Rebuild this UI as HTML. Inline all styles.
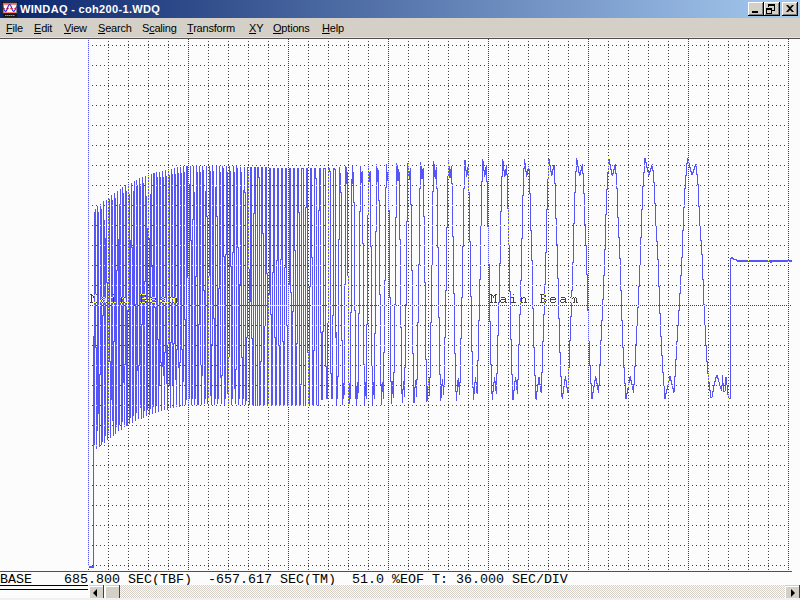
<!DOCTYPE html>
<html><head><meta charset="utf-8"><style>
html,body{margin:0;padding:0;width:800px;height:600px;overflow:hidden;background:#fcfcfc;}
*{box-sizing:border-box;}
.abs{position:absolute;}
#title{left:0;top:0;width:800px;height:18px;background:linear-gradient(to right,#0a246a,#a6caf0);}
#ttext{left:20px;top:3px;font:bold 11px "Liberation Sans",sans-serif;letter-spacing:0.33px;color:#fff;white-space:nowrap;line-height:12px;}
#menu{left:0;top:18px;width:800px;height:19px;background:#d4d0c8;}
.mi{top:22px;font:11px "Liberation Sans",sans-serif;letter-spacing:-0.2px;color:#000;white-space:nowrap;line-height:12px;}
.mi u{text-decoration:underline;text-underline-offset:1px;}
#status{left:0;top:573px;font:13.333px "Liberation Mono",monospace;color:#000;white-space:pre;line-height:14px;}
.lbl{font:12px "Liberation Mono",monospace;letter-spacing:2.8px;color:#383838;white-space:pre;line-height:12px;}
</style></head><body>
<div id="title" class="abs"></div>
<svg class="abs" style="left:0;top:0" width="20" height="18" shape-rendering="crispEdges">
<rect x="2" y="2" width="16" height="12" fill="#2a2a2a"/>
<rect x="3" y="3" width="14" height="10" fill="#8a8a80"/>
<rect x="4" y="4" width="12" height="9" fill="#ffffff"/>
<rect x="4" y="4" width="12" height="1" fill="#ff8080"/>
<rect x="4" y="12" width="12" height="1" fill="#ff8080"/>
<rect x="2" y="2" width="1" height="1" fill="#000"/><rect x="17" y="2" width="1" height="1" fill="#000"/>
<path d="M4 8h1v1h-1zM6 8h1v1h-1zM8 8h1v1h-1zM10 8h1v1h-1zM12 8h1v1h-1zM14 8h1v1h-1zM16 8h1v1h-1z" fill="#ff6060"/>
<path d="M3.4 7.6C4 10 4.6 11.3 5.6 11.3C7.5 11.3 7.6 4.5 9.6 4.5C11.6 4.5 11.6 11.3 13.6 11.3C14.8 11.3 15.6 9 16.5 6.6" fill="none" stroke="#2828f0" stroke-width="1.15" shape-rendering="auto"/>
<rect x="3" y="14" width="14" height="3" fill="#141414"/>
<path d="M5 15h1v1h-1zM7 15h1v1h-1zM9 15h1v1h-1zM11 15h1v1h-1zM13 15h1v1h-1z" fill="#9a9a9a"/>
<path d="M6 15h1v1h-1zM8 15h1v1h-1zM10 15h1v1h-1zM12 15h1v1h-1zM14 15h1v1h-1z" fill="#5a5a5a"/>
</svg>
<div id="ttext" class="abs">WINDAQ - coh200-1.WDQ</div>
<svg class="abs" style="left:748px;top:2px" width="50" height="14" shape-rendering="crispEdges">
<g transform="translate(0,0)">
<rect x="0" y="0" width="16" height="14" fill="#000"/>
<rect x="0" y="0" width="15" height="13" fill="#fff"/>
<rect x="1" y="1" width="14" height="12" fill="#808080"/>
<rect x="1" y="1" width="13" height="11" fill="#d4d0c8"/>
</g><g transform="translate(16,0)">
<rect x="0" y="0" width="16" height="14" fill="#000"/>
<rect x="0" y="0" width="15" height="13" fill="#fff"/>
<rect x="1" y="1" width="14" height="12" fill="#808080"/>
<rect x="1" y="1" width="13" height="11" fill="#d4d0c8"/>
</g><g transform="translate(34,0)">
<rect x="0" y="0" width="16" height="14" fill="#000"/>
<rect x="0" y="0" width="15" height="13" fill="#fff"/>
<rect x="1" y="1" width="14" height="12" fill="#808080"/>
<rect x="1" y="1" width="13" height="11" fill="#d4d0c8"/>
</g>
<rect x="4" y="9" width="6" height="2" fill="#000"/>
<path d="M20 2h7v7h-3v-1h2v-4h-5v1h-1z" fill="#000"/>
<path d="M18 6h6v6h-6zM19 8v3h4v-3z" fill="#000" fill-rule="evenodd"/>
<path d="M38 3h2l2 2 2-2h2l-3 3.5 3 3.5h-2l-2-2-2 2h-2l3-3.5z" fill="#000" shape-rendering="auto"/>
</svg>
<div id="menu" class="abs"></div>
<div class="abs" style="left:0;top:37px;width:800px;height:1px;background:#e4e2dc"></div>
<div class="abs" style="left:0;top:38px;width:800px;height:1px;background:#505050"></div>
<div class="abs mi" style="left:6px"><u>F</u>ile</div>
<div class="abs mi" style="left:34px"><u>E</u>dit</div>
<div class="abs mi" style="left:64px"><u>V</u>iew</div>
<div class="abs mi" style="left:98px"><u>S</u>earch</div>
<div class="abs mi" style="left:142px">S<u>c</u>aling</div>
<div class="abs mi" style="left:187px"><u>T</u>ransform</div>
<div class="abs mi" style="left:249px"><u>X</u>Y</div>
<div class="abs mi" style="left:273px"><u>O</u>ptions</div>
<div class="abs mi" style="left:322px"><u>H</u>elp</div>
<svg class="abs" style="left:0;top:0" width="800" height="600" shape-rendering="crispEdges">
<g stroke="#404040" stroke-width="1"><line x1="108.5" y1="41" x2="108.5" y2="570" stroke-dasharray="1 2"/><line x1="128.5" y1="41" x2="128.5" y2="570" stroke-dasharray="1 2"/><line x1="148.5" y1="41" x2="148.5" y2="570" stroke-dasharray="1 2"/><line x1="168.5" y1="41" x2="168.5" y2="570" stroke-dasharray="1 2"/><line x1="208.5" y1="41" x2="208.5" y2="570" stroke-dasharray="1 2"/><line x1="228.5" y1="41" x2="228.5" y2="570" stroke-dasharray="1 2"/><line x1="248.5" y1="41" x2="248.5" y2="570" stroke-dasharray="1 2"/><line x1="268.5" y1="41" x2="268.5" y2="570" stroke-dasharray="1 2"/><line x1="308.5" y1="41" x2="308.5" y2="570" stroke-dasharray="1 2"/><line x1="328.5" y1="41" x2="328.5" y2="570" stroke-dasharray="1 2"/><line x1="348.5" y1="41" x2="348.5" y2="570" stroke-dasharray="1 2"/><line x1="368.5" y1="41" x2="368.5" y2="570" stroke-dasharray="1 2"/><line x1="408.5" y1="41" x2="408.5" y2="570" stroke-dasharray="1 2"/><line x1="428.5" y1="41" x2="428.5" y2="570" stroke-dasharray="1 2"/><line x1="448.5" y1="41" x2="448.5" y2="570" stroke-dasharray="1 2"/><line x1="468.5" y1="41" x2="468.5" y2="570" stroke-dasharray="1 2"/><line x1="508.5" y1="41" x2="508.5" y2="570" stroke-dasharray="1 2"/><line x1="528.5" y1="41" x2="528.5" y2="570" stroke-dasharray="1 2"/><line x1="548.5" y1="41" x2="548.5" y2="570" stroke-dasharray="1 2"/><line x1="568.5" y1="41" x2="568.5" y2="570" stroke-dasharray="1 2"/><line x1="608.5" y1="41" x2="608.5" y2="570" stroke-dasharray="1 2"/><line x1="628.5" y1="41" x2="628.5" y2="570" stroke-dasharray="1 2"/><line x1="648.5" y1="41" x2="648.5" y2="570" stroke-dasharray="1 2"/><line x1="668.5" y1="41" x2="668.5" y2="570" stroke-dasharray="1 2"/><line x1="708.5" y1="41" x2="708.5" y2="570" stroke-dasharray="1 2"/><line x1="728.5" y1="41" x2="728.5" y2="570" stroke-dasharray="1 2"/><line x1="748.5" y1="41" x2="748.5" y2="570" stroke-dasharray="1 2"/><line x1="768.5" y1="41" x2="768.5" y2="570" stroke-dasharray="1 2"/><line x1="88.5" y1="39" x2="88.5" y2="570" stroke-dasharray="1 1"/><line x1="188.5" y1="39" x2="188.5" y2="570" stroke-dasharray="1 1"/><line x1="288.5" y1="39" x2="288.5" y2="570" stroke-dasharray="1 1"/><line x1="388.5" y1="39" x2="388.5" y2="570" stroke-dasharray="1 1"/><line x1="488.5" y1="39" x2="488.5" y2="570" stroke-dasharray="1 1"/><line x1="588.5" y1="39" x2="588.5" y2="570" stroke-dasharray="1 1"/><line x1="688.5" y1="39" x2="688.5" y2="570" stroke-dasharray="1 1"/><line x1="788.5" y1="39" x2="788.5" y2="570" stroke-dasharray="1 1"/><line x1="92" y1="45.5" x2="785" y2="45.5" stroke-dasharray="1 3"/><line x1="92" y1="65.5" x2="785" y2="65.5" stroke-dasharray="1 3"/><line x1="92" y1="85.5" x2="785" y2="85.5" stroke-dasharray="1 3"/><line x1="92" y1="105.5" x2="785" y2="105.5" stroke-dasharray="1 3"/><line x1="92" y1="125.5" x2="785" y2="125.5" stroke-dasharray="1 3"/><line x1="92" y1="145.5" x2="785" y2="145.5" stroke-dasharray="1 3"/><line x1="92" y1="165.5" x2="785" y2="165.5" stroke-dasharray="1 3"/><line x1="92" y1="185.5" x2="785" y2="185.5" stroke-dasharray="1 3"/><line x1="92" y1="205.5" x2="785" y2="205.5" stroke-dasharray="1 3"/><line x1="92" y1="225.5" x2="785" y2="225.5" stroke-dasharray="1 3"/><line x1="92" y1="245.5" x2="785" y2="245.5" stroke-dasharray="1 3"/><line x1="92" y1="265.5" x2="785" y2="265.5" stroke-dasharray="1 3"/><line x1="92" y1="285.5" x2="785" y2="285.5" stroke-dasharray="1 3"/><line x1="92" y1="325.5" x2="785" y2="325.5" stroke-dasharray="1 3"/><line x1="92" y1="345.5" x2="785" y2="345.5" stroke-dasharray="1 3"/><line x1="92" y1="365.5" x2="785" y2="365.5" stroke-dasharray="1 3"/><line x1="92" y1="385.5" x2="785" y2="385.5" stroke-dasharray="1 3"/><line x1="92" y1="405.5" x2="785" y2="405.5" stroke-dasharray="1 3"/><line x1="92" y1="425.5" x2="785" y2="425.5" stroke-dasharray="1 3"/><line x1="92" y1="445.5" x2="785" y2="445.5" stroke-dasharray="1 3"/><line x1="92" y1="465.5" x2="785" y2="465.5" stroke-dasharray="1 3"/><line x1="92" y1="485.5" x2="785" y2="485.5" stroke-dasharray="1 3"/><line x1="92" y1="505.5" x2="785" y2="505.5" stroke-dasharray="1 3"/><line x1="92" y1="525.5" x2="785" y2="525.5" stroke-dasharray="1 3"/><line x1="92" y1="545.5" x2="785" y2="545.5" stroke-dasharray="1 3"/><line x1="92" y1="565.5" x2="785" y2="565.5" stroke-dasharray="1 3"/><line x1="88" y1="305.5" x2="791" y2="305.5" stroke-dasharray="1 1"/></g>
<path fill="#404040" d="M90 294h1v1h-1zM90 302h1v1h-1zM91 294h1v9h-1zM92 295h1v1h-1zM92 302h1v1h-1zM93 296h1v2h-1zM96 294h1v1h-1zM96 302h1v1h-1zM102 297h1v1h-1zM102 299h1v1h-1zM102 302h1v1h-1zM106 302h1v1h-1zM113 294h1v1h-1zM113 297h1v6h-1zM121 297h1v6h-1zM124 297h1v1h-1zM124 302h1v1h-1zM141 294h1v9h-1zM145 295h1v2h-1zM145 299h1v1h-1zM145 301h1v2h-1zM151 297h1v1h-1zM151 299h1v1h-1zM151 302h1v1h-1zM155 298h1v2h-1zM155 301h1v1h-1zM161 297h1v1h-1zM161 299h1v1h-1zM161 302h1v1h-1zM164 297h1v1h-1zM164 299h1v1h-1zM164 301h1v1h-1zM170 297h1v1h-1zM170 302h1v1h-1zM173 297h1v1h-1zM173 302h1v1h-1zM176 298h1v5h-1zM490 294h1v1h-1zM490 302h1v1h-1zM491 294h1v9h-1zM492 295h1v1h-1zM492 302h1v1h-1zM493 296h1v2h-1zM494 295h1v1h-1zM494 302h1v1h-1zM495 294h1v9h-1zM496 294h1v1h-1zM496 302h1v1h-1zM500 300h1v2h-1zM501 297h1v1h-1zM501 299h1v1h-1zM501 302h1v1h-1zM502 297h1v1h-1zM502 299h1v1h-1zM502 302h1v1h-1zM503 297h1v1h-1zM503 299h1v1h-1zM503 302h1v1h-1zM504 297h1v1h-1zM504 299h1v1h-1zM504 301h1v1h-1zM505 298h1v5h-1zM506 302h1v1h-1zM511 297h1v1h-1zM511 302h1v1h-1zM512 297h1v1h-1zM512 302h1v1h-1zM513 294h1v1h-1zM513 297h1v6h-1zM514 302h1v1h-1zM515 302h1v1h-1zM521 297h1v6h-1zM522 298h1v1h-1zM522 302h1v1h-1zM523 297h1v1h-1zM524 297h1v1h-1zM524 302h1v1h-1zM525 298h1v5h-1zM526 302h1v1h-1zM540 294h1v1h-1zM540 302h1v1h-1zM541 294h1v9h-1zM542 294h1v1h-1zM542 298h1v1h-1zM542 302h1v1h-1zM543 294h1v1h-1zM543 298h1v1h-1zM543 302h1v1h-1zM545 295h1v2h-1zM545 299h1v1h-1zM545 301h1v2h-1zM546 300h1v1h-1zM550 298h1v4h-1zM551 297h1v1h-1zM551 299h1v1h-1zM551 302h1v1h-1zM552 297h1v1h-1zM552 299h1v1h-1zM552 302h1v1h-1zM553 297h1v1h-1zM553 299h1v1h-1zM553 302h1v1h-1zM554 297h1v1h-1zM554 299h1v1h-1zM554 302h1v1h-1zM555 298h1v2h-1zM555 301h1v1h-1zM560 300h1v2h-1zM561 297h1v1h-1zM561 299h1v1h-1zM561 302h1v1h-1zM562 297h1v1h-1zM562 299h1v1h-1zM562 302h1v1h-1zM563 297h1v1h-1zM563 299h1v1h-1zM563 302h1v1h-1zM564 297h1v1h-1zM564 299h1v1h-1zM564 301h1v1h-1zM565 298h1v5h-1zM566 302h1v1h-1zM570 297h1v1h-1zM570 302h1v1h-1zM572 298h1v1h-1zM573 297h1v1h-1zM573 302h1v1h-1zM574 298h1v5h-1zM575 297h1v1h-1zM576 298h1v5h-1zM577 302h1v1h-1z"/>
<path fill="#5656f8" d="M88 40h1v1h-1zM88 42h1v1h-1zM88 44h1v1h-1zM88 46h1v1h-1zM88 48h1v1h-1zM88 50h1v1h-1zM88 52h1v1h-1zM88 54h1v1h-1zM88 56h1v1h-1zM88 58h1v1h-1zM88 60h1v1h-1zM88 62h1v1h-1zM88 64h1v1h-1zM88 66h1v1h-1zM88 68h1v1h-1zM88 70h1v1h-1zM88 72h1v1h-1zM88 74h1v1h-1zM88 76h1v1h-1zM88 78h1v1h-1zM88 80h1v1h-1zM88 82h1v1h-1zM88 84h1v1h-1zM88 86h1v1h-1zM88 88h1v1h-1zM88 90h1v1h-1zM88 92h1v1h-1zM88 94h1v1h-1zM88 96h1v1h-1zM88 98h1v1h-1zM88 100h1v1h-1zM88 102h1v1h-1zM88 104h1v1h-1zM88 106h1v1h-1zM88 108h1v1h-1zM88 110h1v1h-1zM88 112h1v1h-1zM88 114h1v1h-1zM88 116h1v1h-1zM88 118h1v1h-1zM88 120h1v1h-1zM88 122h1v1h-1zM88 124h1v1h-1zM88 126h1v1h-1zM88 128h1v1h-1zM88 130h1v1h-1zM88 132h1v1h-1zM88 134h1v1h-1zM88 136h1v1h-1zM88 138h1v1h-1zM88 140h1v1h-1zM88 142h1v1h-1zM88 144h1v1h-1zM88 146h1v1h-1zM88 148h1v1h-1zM88 150h1v1h-1zM88 152h1v1h-1zM88 154h1v1h-1zM88 156h1v1h-1zM88 158h1v1h-1zM88 160h1v1h-1zM88 162h1v1h-1zM88 164h1v1h-1zM88 166h1v1h-1zM88 168h1v1h-1zM88 170h1v1h-1zM88 172h1v1h-1zM88 174h1v1h-1zM88 176h1v1h-1zM88 178h1v1h-1zM88 180h1v1h-1zM88 182h1v1h-1zM88 184h1v1h-1zM88 186h1v1h-1zM88 188h1v1h-1zM88 190h1v1h-1zM88 192h1v1h-1zM88 194h1v1h-1zM88 196h1v1h-1zM88 198h1v1h-1zM88 200h1v1h-1zM88 202h1v1h-1zM88 204h1v1h-1zM88 206h1v1h-1zM88 208h1v1h-1zM88 210h1v1h-1zM88 212h1v1h-1zM88 214h1v1h-1zM88 216h1v1h-1zM88 218h1v1h-1zM88 220h1v1h-1zM88 222h1v1h-1zM88 224h1v1h-1zM88 226h1v1h-1zM88 228h1v1h-1zM88 230h1v1h-1zM88 232h1v1h-1zM88 234h1v1h-1zM88 236h1v1h-1zM88 238h1v1h-1zM88 240h1v1h-1zM88 242h1v1h-1zM88 244h1v1h-1zM88 246h1v1h-1zM88 248h1v1h-1zM88 250h1v1h-1zM88 252h1v1h-1zM88 254h1v1h-1zM88 256h1v1h-1zM88 258h1v1h-1zM88 260h1v1h-1zM88 262h1v1h-1zM88 264h1v1h-1zM88 266h1v1h-1zM88 268h1v1h-1zM88 270h1v1h-1zM88 272h1v1h-1zM88 274h1v1h-1zM88 276h1v1h-1zM88 278h1v1h-1zM88 280h1v1h-1zM88 282h1v1h-1zM88 284h1v1h-1zM88 286h1v1h-1zM88 288h1v1h-1zM88 290h1v1h-1zM88 292h1v1h-1zM88 294h1v1h-1zM88 296h1v1h-1zM88 298h1v1h-1zM88 300h1v1h-1zM88 302h1v1h-1zM88 304h1v1h-1zM88 306h1v1h-1zM88 308h1v1h-1zM88 310h1v1h-1zM88 312h1v1h-1zM88 314h1v1h-1zM88 316h1v1h-1zM88 318h1v1h-1zM88 320h1v1h-1zM88 322h1v1h-1zM88 324h1v1h-1zM88 326h1v1h-1zM88 328h1v1h-1zM88 330h1v1h-1zM88 332h1v1h-1zM88 334h1v1h-1zM88 336h1v1h-1zM88 338h1v1h-1zM88 340h1v1h-1zM88 342h1v1h-1zM88 344h1v1h-1zM88 346h1v1h-1zM88 348h1v1h-1zM88 350h1v1h-1zM88 352h1v1h-1zM88 354h1v1h-1zM88 356h1v1h-1zM88 358h1v1h-1zM88 360h1v1h-1zM88 362h1v1h-1zM88 364h1v1h-1zM88 366h1v1h-1zM88 368h1v1h-1zM88 370h1v1h-1zM88 372h1v1h-1zM88 374h1v1h-1zM88 376h1v1h-1zM88 378h1v1h-1zM88 380h1v1h-1zM88 382h1v1h-1zM88 384h1v1h-1zM88 386h1v1h-1zM88 388h1v1h-1zM88 390h1v1h-1zM88 392h1v1h-1zM88 394h1v1h-1zM88 396h1v1h-1zM88 398h1v1h-1zM88 400h1v1h-1zM88 402h1v1h-1zM88 404h1v1h-1zM88 406h1v1h-1zM88 408h1v1h-1zM88 410h1v1h-1zM88 412h1v1h-1zM88 414h1v1h-1zM88 416h1v1h-1zM88 418h1v1h-1zM88 420h1v1h-1zM88 422h1v1h-1zM88 424h1v1h-1zM88 426h1v1h-1zM88 428h1v1h-1zM88 430h1v1h-1zM88 432h1v1h-1zM88 434h1v1h-1zM88 436h1v1h-1zM88 438h1v1h-1zM88 440h1v1h-1zM88 442h1v1h-1zM88 444h1v1h-1zM88 446h1v1h-1zM88 448h1v1h-1zM88 450h1v1h-1zM88 452h1v1h-1zM88 454h1v1h-1zM88 456h1v1h-1zM88 458h1v1h-1zM88 460h1v1h-1zM88 462h1v1h-1zM88 464h1v1h-1zM88 466h1v1h-1zM88 468h1v1h-1zM88 470h1v1h-1zM88 472h1v1h-1zM88 474h1v1h-1zM88 476h1v1h-1zM88 478h1v1h-1zM88 480h1v1h-1zM88 482h1v1h-1zM88 484h1v1h-1zM88 486h1v1h-1zM88 488h1v1h-1zM88 490h1v1h-1zM88 492h1v1h-1zM88 494h1v1h-1zM88 496h1v1h-1zM88 498h1v1h-1zM88 500h1v1h-1zM88 502h1v1h-1zM88 504h1v1h-1zM88 506h1v1h-1zM88 508h1v1h-1zM88 510h1v1h-1zM88 512h1v1h-1zM88 514h1v1h-1zM88 516h1v1h-1zM88 518h1v1h-1zM88 520h1v1h-1zM88 522h1v1h-1zM88 524h1v1h-1zM88 526h1v1h-1zM88 528h1v1h-1zM88 530h1v1h-1zM88 532h1v1h-1zM88 534h1v1h-1zM88 536h1v1h-1zM88 538h1v1h-1zM88 540h1v1h-1zM88 542h1v1h-1zM88 544h1v1h-1zM88 546h1v1h-1zM88 548h1v1h-1zM88 550h1v1h-1zM88 552h1v1h-1zM88 554h1v1h-1zM88 556h1v1h-1zM88 558h1v1h-1zM88 560h1v1h-1zM88 562h1v1h-1zM88 564h1v1h-1zM89 566h1v2h-1zM90 566h1v2h-1zM91 566h1v2h-1zM92 566h1v2h-1zM93 336h1v232h-1zM94 212h1v83h-1zM94 296h1v6h-1zM94 303h1v2h-1zM94 306h1v139h-1zM95 209h1v85h-1zM95 303h1v45h-1zM96 347h1v18h-1zM96 366h1v19h-1zM96 386h1v19h-1zM96 406h1v19h-1zM96 426h1v19h-1zM96 446h1v3h-1zM97 206h1v225h-1zM98 212h1v93h-1zM98 306h1v108h-1zM99 374h1v73h-1zM100 204h1v1h-1zM100 206h1v19h-1zM100 226h1v19h-1zM100 246h1v19h-1zM100 266h1v19h-1zM100 286h1v14h-1zM100 302h1v3h-1zM100 306h1v19h-1zM100 326h1v19h-1zM100 346h1v19h-1zM100 366h1v9h-1zM101 209h1v88h-1zM101 298h1v1h-1zM101 300h1v2h-1zM101 303h1v142h-1zM102 315h1v127h-1zM103 201h1v96h-1zM103 298h1v1h-1zM103 300h1v2h-1zM103 303h1v13h-1zM104 220h1v5h-1zM104 226h1v19h-1zM104 246h1v19h-1zM104 266h1v19h-1zM104 286h1v11h-1zM104 298h1v1h-1zM104 300h1v1h-1zM104 302h1v3h-1zM104 306h1v19h-1zM104 326h1v19h-1zM104 346h1v19h-1zM104 366h1v19h-1zM104 386h1v19h-1zM104 406h1v19h-1zM104 426h1v17h-1zM105 238h1v60h-1zM105 303h1v133h-1zM106 200h1v83h-1zM107 282h1v158h-1zM108 198h1v2h-1zM108 201h1v2h-1zM108 204h1v1h-1zM108 207h1v2h-1zM108 210h1v2h-1zM108 213h1v2h-1zM108 216h1v2h-1zM108 219h1v2h-1zM108 222h1v2h-1zM108 226h1v1h-1zM108 228h1v2h-1zM108 231h1v2h-1zM108 234h1v2h-1zM108 237h1v2h-1zM108 240h1v2h-1zM108 243h1v2h-1zM108 246h1v2h-1zM108 249h1v2h-1zM108 252h1v2h-1zM108 255h1v2h-1zM108 258h1v2h-1zM108 261h1v2h-1zM108 264h1v1h-1zM108 267h1v2h-1zM108 270h1v2h-1zM108 273h1v2h-1zM108 276h1v2h-1zM108 279h1v2h-1zM108 282h1v2h-1zM108 286h1v1h-1zM108 288h1v2h-1zM108 291h1v2h-1zM108 294h1v2h-1zM108 297h1v2h-1zM108 300h1v2h-1zM108 303h1v2h-1zM108 306h1v2h-1zM108 309h1v2h-1zM108 312h1v2h-1zM108 315h1v2h-1zM108 318h1v2h-1zM108 321h1v2h-1zM108 324h1v1h-1zM108 327h1v2h-1zM108 330h1v2h-1zM108 333h1v2h-1zM108 336h1v2h-1zM108 339h1v2h-1zM108 342h1v2h-1zM108 346h1v1h-1zM108 348h1v2h-1zM108 351h1v2h-1zM108 354h1v2h-1zM108 357h1v2h-1zM108 360h1v2h-1zM108 363h1v2h-1zM108 366h1v2h-1zM108 369h1v2h-1zM108 372h1v2h-1zM108 375h1v2h-1zM108 378h1v2h-1zM108 381h1v2h-1zM108 384h1v1h-1zM108 387h1v2h-1zM108 390h1v2h-1zM108 393h1v2h-1zM108 396h1v2h-1zM108 399h1v2h-1zM108 402h1v2h-1zM108 406h1v1h-1zM108 408h1v2h-1zM108 411h1v2h-1zM108 414h1v2h-1zM108 417h1v2h-1zM108 420h1v2h-1zM108 423h1v2h-1zM108 426h1v2h-1zM108 429h1v2h-1zM108 432h1v1h-1zM109 199h1v163h-1zM110 361h1v77h-1zM111 195h1v102h-1zM111 298h1v4h-1zM111 303h1v97h-1zM112 200h1v5h-1zM112 206h1v19h-1zM112 226h1v19h-1zM112 246h1v19h-1zM112 266h1v19h-1zM112 286h1v11h-1zM112 298h1v4h-1zM112 303h1v2h-1zM112 306h1v19h-1zM112 326h1v19h-1zM112 346h1v19h-1zM112 366h1v19h-1zM112 386h1v19h-1zM112 406h1v15h-1zM113 341h1v95h-1zM114 193h1v109h-1zM114 303h1v2h-1zM114 306h1v36h-1zM115 198h1v104h-1zM115 303h1v131h-1zM116 270h1v15h-1zM116 286h1v19h-1zM116 306h1v19h-1zM116 326h1v19h-1zM116 346h1v19h-1zM116 366h1v19h-1zM116 386h1v19h-1zM116 406h1v19h-1zM116 426h1v1h-1zM117 191h1v80h-1zM118 239h1v66h-1zM118 306h1v125h-1zM119 204h1v221h-1zM120 189h1v16h-1zM120 206h1v19h-1zM120 226h1v19h-1zM120 246h1v19h-1zM120 266h1v19h-1zM120 286h1v11h-1zM120 298h1v4h-1zM120 303h1v2h-1zM121 305h1v125h-1zM122 187h1v111h-1zM122 299h1v3h-1zM122 303h1v2h-1zM122 306h1v116h-1zM123 193h1v104h-1zM123 298h1v85h-1zM124 364h1v1h-1zM124 366h1v19h-1zM124 386h1v19h-1zM124 406h1v19h-1zM124 426h1v1h-1zM125 185h1v113h-1zM125 303h1v62h-1zM126 191h1v111h-1zM126 303h1v2h-1zM126 306h1v120h-1zM127 310h1v116h-1zM128 184h1v1h-1zM128 186h1v2h-1zM128 189h1v2h-1zM128 192h1v2h-1zM128 195h1v2h-1zM128 198h1v2h-1zM128 201h1v2h-1zM128 204h1v1h-1zM128 207h1v2h-1zM128 210h1v2h-1zM128 213h1v2h-1zM128 216h1v2h-1zM128 219h1v2h-1zM128 222h1v2h-1zM128 226h1v1h-1zM128 228h1v2h-1zM128 231h1v2h-1zM128 234h1v2h-1zM128 237h1v2h-1zM128 240h1v2h-1zM128 243h1v2h-1zM128 246h1v2h-1zM128 249h1v2h-1zM128 252h1v2h-1zM128 255h1v2h-1zM128 258h1v2h-1zM128 261h1v2h-1zM128 264h1v1h-1zM128 267h1v2h-1zM128 270h1v2h-1zM128 273h1v2h-1zM128 276h1v2h-1zM128 279h1v2h-1zM128 282h1v2h-1zM128 286h1v1h-1zM128 288h1v2h-1zM128 291h1v2h-1zM128 294h1v2h-1zM128 297h1v2h-1zM128 300h1v2h-1zM128 303h1v2h-1zM128 306h1v2h-1zM128 309h1v2h-1zM129 194h1v230h-1zM130 240h1v65h-1zM130 306h1v112h-1zM131 183h1v65h-1zM132 247h1v18h-1zM132 266h1v19h-1zM132 286h1v19h-1zM132 306h1v19h-1zM132 326h1v19h-1zM132 346h1v19h-1zM132 366h1v19h-1zM132 386h1v19h-1zM132 406h1v17h-1zM133 191h1v225h-1zM134 181h1v124h-1zM135 304h1v117h-1zM136 180h1v5h-1zM136 186h1v19h-1zM136 206h1v19h-1zM136 226h1v19h-1zM136 246h1v19h-1zM136 266h1v19h-1zM136 286h1v19h-1zM136 306h1v19h-1zM136 326h1v19h-1zM136 346h1v19h-1zM136 366h1v19h-1zM136 386h1v19h-1zM136 406h1v7h-1zM137 185h1v186h-1zM138 365h1v54h-1zM139 178h1v188h-1zM140 184h1v1h-1zM140 186h1v19h-1zM140 206h1v19h-1zM140 226h1v19h-1zM140 246h1v19h-1zM140 266h1v19h-1zM140 286h1v8h-1zM140 295h1v7h-1zM140 303h1v2h-1zM140 306h1v19h-1zM140 326h1v19h-1zM140 346h1v19h-1zM140 366h1v19h-1zM140 386h1v19h-1zM140 406h1v2h-1zM141 324h1v95h-1zM142 177h1v117h-1zM142 295h1v3h-1zM142 299h1v3h-1zM142 303h1v2h-1zM142 306h1v19h-1zM143 183h1v111h-1zM143 295h1v3h-1zM143 299h1v3h-1zM143 303h1v115h-1zM144 281h1v4h-1zM144 286h1v8h-1zM144 295h1v2h-1zM144 299h1v3h-1zM144 303h1v2h-1zM144 306h1v19h-1zM144 326h1v19h-1zM144 346h1v19h-1zM144 366h1v19h-1zM144 386h1v19h-1zM144 406h1v5h-1zM145 176h1v106h-1zM146 196h1v104h-1zM146 301h1v4h-1zM146 306h1v110h-1zM147 228h1v182h-1zM148 175h1v1h-1zM148 177h1v2h-1zM148 180h1v2h-1zM148 183h1v2h-1zM148 186h1v2h-1zM148 189h1v2h-1zM148 192h1v2h-1zM148 195h1v2h-1zM148 198h1v2h-1zM148 201h1v2h-1zM148 204h1v1h-1zM148 207h1v2h-1zM148 210h1v2h-1zM148 213h1v2h-1zM148 216h1v2h-1zM148 219h1v2h-1zM148 222h1v2h-1zM148 226h1v1h-1zM148 228h1v2h-1zM148 231h1v2h-1zM148 234h1v2h-1zM148 237h1v2h-1zM149 238h1v177h-1zM150 194h1v104h-1zM150 302h1v3h-1zM150 306h1v103h-1zM151 174h1v93h-1zM152 266h1v19h-1zM152 286h1v11h-1zM152 298h1v1h-1zM152 300h1v2h-1zM152 303h1v2h-1zM152 306h1v19h-1zM152 326h1v19h-1zM152 346h1v19h-1zM152 366h1v19h-1zM152 386h1v19h-1zM152 406h1v8h-1zM153 173h1v124h-1zM153 298h1v1h-1zM153 300h1v2h-1zM153 303h1v104h-1zM154 173h1v124h-1zM154 298h1v1h-1zM154 300h1v2h-1zM154 303h1v2h-1zM154 306h1v2h-1zM155 307h1v106h-1zM156 172h1v13h-1zM156 186h1v19h-1zM156 206h1v19h-1zM156 226h1v19h-1zM156 246h1v19h-1zM156 266h1v19h-1zM156 286h1v19h-1zM156 306h1v19h-1zM156 326h1v19h-1zM156 346h1v19h-1zM156 366h1v19h-1zM156 386h1v19h-1zM157 177h1v163h-1zM158 339h1v73h-1zM159 172h1v214h-1zM160 177h1v8h-1zM160 186h1v19h-1zM160 206h1v19h-1zM160 226h1v19h-1zM160 246h1v19h-1zM160 266h1v19h-1zM160 286h1v14h-1zM160 302h1v3h-1zM160 306h1v19h-1zM160 326h1v19h-1zM160 346h1v17h-1zM161 362h1v49h-1zM162 171h1v126h-1zM162 298h1v1h-1zM162 300h1v2h-1zM162 303h1v2h-1zM162 306h1v61h-1zM163 177h1v120h-1zM163 298h1v1h-1zM163 300h1v2h-1zM163 303h1v73h-1zM164 352h1v13h-1zM164 366h1v19h-1zM164 386h1v19h-1zM164 406h1v4h-1zM165 170h1v128h-1zM165 303h1v50h-1zM166 176h1v126h-1zM166 303h1v2h-1zM166 306h1v78h-1zM167 345h1v65h-1zM168 169h1v1h-1zM168 171h1v2h-1zM168 174h1v2h-1zM168 177h1v2h-1zM168 180h1v2h-1zM168 183h1v2h-1zM168 186h1v2h-1zM168 189h1v2h-1zM168 192h1v2h-1zM168 195h1v2h-1zM168 198h1v2h-1zM168 201h1v2h-1zM168 204h1v1h-1zM168 207h1v2h-1zM168 210h1v2h-1zM168 213h1v2h-1zM168 216h1v2h-1zM168 219h1v2h-1zM168 222h1v2h-1zM168 226h1v1h-1zM168 228h1v2h-1zM168 231h1v2h-1zM168 234h1v2h-1zM168 237h1v2h-1zM168 240h1v2h-1zM168 243h1v2h-1zM168 246h1v2h-1zM168 249h1v2h-1zM168 252h1v2h-1zM168 255h1v2h-1zM168 258h1v2h-1zM168 261h1v2h-1zM168 264h1v1h-1zM168 267h1v2h-1zM168 270h1v2h-1zM168 273h1v2h-1zM168 276h1v2h-1zM168 279h1v2h-1zM168 282h1v2h-1zM168 286h1v1h-1zM168 288h1v2h-1zM168 291h1v2h-1zM168 294h1v2h-1zM168 297h1v2h-1zM168 300h1v2h-1zM168 303h1v2h-1zM168 306h1v2h-1zM168 309h1v2h-1zM168 312h1v2h-1zM168 315h1v2h-1zM168 318h1v2h-1zM168 321h1v2h-1zM168 324h1v1h-1zM168 327h1v2h-1zM168 330h1v2h-1zM168 333h1v2h-1zM168 336h1v2h-1zM168 339h1v2h-1zM168 342h1v2h-1zM169 175h1v211h-1zM170 342h1v66h-1zM171 169h1v128h-1zM171 303h1v40h-1zM172 174h1v11h-1zM172 186h1v19h-1zM172 206h1v19h-1zM172 226h1v19h-1zM172 246h1v19h-1zM172 266h1v19h-1zM172 286h1v12h-1zM172 299h1v6h-1zM172 306h1v19h-1zM172 326h1v19h-1zM172 346h1v19h-1zM172 366h1v19h-1zM173 343h1v65h-1zM174 168h1v130h-1zM174 303h1v2h-1zM174 306h1v38h-1zM175 174h1v123h-1zM175 298h1v82h-1zM176 349h1v16h-1zM176 366h1v19h-1zM176 386h1v19h-1zM176 406h1v1h-1zM177 167h1v135h-1zM177 303h1v47h-1zM178 173h1v132h-1zM178 306h1v62h-1zM179 362h1v45h-1zM180 167h1v18h-1zM180 186h1v19h-1zM180 206h1v19h-1zM180 226h1v19h-1zM180 246h1v19h-1zM180 266h1v19h-1zM180 286h1v19h-1zM180 306h1v19h-1zM180 326h1v19h-1zM180 346h1v17h-1zM181 173h1v177h-1zM182 349h1v57h-1zM183 166h1v216h-1zM184 172h1v13h-1zM184 186h1v19h-1zM184 206h1v19h-1zM184 226h1v19h-1zM184 246h1v19h-1zM184 266h1v19h-1zM184 286h1v19h-1zM184 306h1v14h-1zM185 319h1v86h-1zM186 166h1v139h-1zM186 306h1v94h-1zM187 166h1v112h-1zM188 278h1v1h-1zM188 280h1v1h-1zM188 282h1v1h-1zM188 284h1v1h-1zM188 286h1v1h-1zM188 288h1v1h-1zM188 290h1v1h-1zM188 292h1v1h-1zM188 294h1v1h-1zM188 296h1v1h-1zM188 298h1v1h-1zM188 300h1v1h-1zM188 302h1v1h-1zM188 304h1v1h-1zM188 306h1v1h-1zM188 308h1v1h-1zM188 310h1v1h-1zM188 312h1v1h-1zM188 314h1v1h-1zM188 316h1v1h-1zM188 318h1v1h-1zM188 320h1v1h-1zM188 322h1v1h-1zM188 324h1v1h-1zM188 326h1v1h-1zM188 328h1v1h-1zM188 330h1v1h-1zM188 332h1v1h-1zM188 334h1v1h-1zM188 336h1v1h-1zM188 338h1v1h-1zM188 340h1v1h-1zM188 342h1v1h-1zM188 344h1v1h-1zM188 346h1v1h-1zM188 348h1v1h-1zM188 350h1v1h-1zM188 352h1v1h-1zM188 354h1v1h-1zM188 356h1v1h-1zM188 358h1v1h-1zM188 360h1v1h-1zM188 362h1v1h-1zM188 364h1v1h-1zM188 366h1v1h-1zM188 368h1v1h-1zM188 370h1v1h-1zM188 372h1v1h-1zM188 374h1v1h-1zM188 376h1v1h-1zM188 378h1v1h-1zM188 380h1v1h-1zM188 382h1v1h-1zM188 384h1v1h-1zM188 386h1v1h-1zM188 388h1v1h-1zM188 390h1v1h-1zM188 392h1v1h-1zM188 394h1v1h-1zM188 396h1v1h-1zM188 398h1v1h-1zM188 400h1v1h-1zM188 402h1v1h-1zM188 404h1v1h-1zM189 184h1v215h-1zM190 166h1v75h-1zM191 240h1v165h-1zM192 219h1v6h-1zM192 226h1v19h-1zM192 246h1v19h-1zM192 266h1v19h-1zM192 286h1v19h-1zM192 306h1v19h-1zM192 326h1v19h-1zM192 346h1v19h-1zM192 366h1v19h-1zM192 386h1v13h-1zM193 166h1v54h-1zM194 192h1v113h-1zM194 306h1v99h-1zM195 276h1v123h-1zM196 166h1v19h-1zM196 186h1v19h-1zM196 206h1v19h-1zM196 226h1v19h-1zM196 246h1v19h-1zM196 266h1v11h-1zM197 172h1v233h-1zM198 324h1v81h-1zM199 166h1v159h-1zM200 172h1v13h-1zM200 186h1v19h-1zM200 206h1v19h-1zM200 226h1v19h-1zM200 246h1v19h-1zM200 266h1v19h-1zM200 286h1v19h-1zM200 306h1v19h-1zM200 326h1v19h-1zM200 346h1v19h-1zM201 365h1v40h-1zM202 166h1v139h-1zM202 306h1v70h-1zM203 170h1v121h-1zM204 290h1v15h-1zM204 306h1v19h-1zM204 326h1v19h-1zM204 346h1v19h-1zM204 366h1v19h-1zM204 386h1v18h-1zM205 191h1v208h-1zM206 166h1v51h-1zM207 216h1v188h-1zM208 276h1v2h-1zM208 279h1v2h-1zM208 282h1v2h-1zM208 286h1v1h-1zM208 288h1v2h-1zM208 291h1v2h-1zM208 294h1v2h-1zM208 297h1v2h-1zM208 300h1v2h-1zM208 303h1v2h-1zM208 306h1v2h-1zM208 309h1v2h-1zM208 312h1v2h-1zM208 315h1v2h-1zM208 318h1v2h-1zM208 321h1v2h-1zM208 324h1v1h-1zM208 327h1v2h-1zM208 330h1v2h-1zM208 333h1v2h-1zM208 336h1v2h-1zM208 339h1v2h-1zM208 342h1v2h-1zM208 346h1v1h-1zM208 348h1v2h-1zM208 351h1v2h-1zM208 354h1v2h-1zM208 357h1v2h-1zM208 360h1v2h-1zM208 363h1v2h-1zM208 366h1v2h-1zM208 369h1v2h-1zM208 372h1v2h-1zM208 375h1v2h-1zM208 378h1v2h-1zM208 381h1v2h-1zM208 384h1v1h-1zM208 387h1v2h-1zM208 390h1v2h-1zM208 393h1v2h-1zM208 396h1v2h-1zM209 166h1v110h-1zM210 171h1v134h-1zM210 306h1v90h-1zM211 344h1v61h-1zM212 166h1v19h-1zM212 186h1v19h-1zM212 206h1v19h-1zM212 226h1v19h-1zM212 246h1v19h-1zM212 266h1v19h-1zM212 286h1v19h-1zM212 306h1v19h-1zM212 326h1v19h-1zM213 171h1v148h-1zM214 318h1v87h-1zM215 187h1v212h-1zM216 166h1v19h-1zM216 186h1v19h-1zM216 206h1v11h-1zM217 216h1v188h-1zM218 288h1v17h-1zM218 306h1v93h-1zM219 166h1v123h-1zM220 172h1v13h-1zM220 186h1v19h-1zM220 206h1v19h-1zM220 226h1v19h-1zM220 246h1v19h-1zM220 266h1v19h-1zM220 286h1v19h-1zM220 306h1v19h-1zM220 326h1v19h-1zM220 346h1v19h-1zM220 366h1v12h-1zM221 375h1v29h-1zM222 166h1v139h-1zM222 306h1v70h-1zM223 168h1v89h-1zM224 256h1v9h-1zM224 266h1v19h-1zM224 286h1v19h-1zM224 306h1v19h-1zM224 326h1v19h-1zM224 346h1v19h-1zM224 366h1v19h-1zM224 386h1v19h-1zM225 254h1v145h-1zM226 166h1v89h-1zM227 172h1v222h-1zM228 357h1v2h-1zM228 360h1v2h-1zM228 363h1v2h-1zM228 366h1v2h-1zM228 369h1v2h-1zM228 372h1v2h-1zM228 375h1v2h-1zM228 378h1v2h-1zM228 381h1v2h-1zM228 384h1v1h-1zM228 387h1v2h-1zM228 390h1v2h-1zM228 393h1v2h-1zM228 396h1v2h-1zM228 399h1v2h-1zM228 402h1v2h-1zM229 166h1v191h-1zM230 171h1v96h-1zM231 266h1v139h-1zM232 252h1v13h-1zM232 266h1v19h-1zM232 286h1v19h-1zM232 306h1v19h-1zM232 326h1v19h-1zM232 346h1v19h-1zM232 366h1v19h-1zM232 386h1v13h-1zM233 166h1v87h-1zM234 172h1v133h-1zM234 306h1v83h-1zM235 369h1v35h-1zM236 166h1v19h-1zM236 186h1v19h-1zM236 206h1v19h-1zM236 226h1v19h-1zM236 246h1v19h-1zM236 266h1v19h-1zM236 286h1v19h-1zM236 306h1v19h-1zM236 326h1v19h-1zM236 346h1v19h-1zM236 366h1v4h-1zM237 168h1v80h-1zM238 247h1v58h-1zM238 306h1v99h-1zM239 284h1v115h-1zM240 167h1v18h-1zM240 186h1v19h-1zM240 206h1v19h-1zM240 226h1v19h-1zM240 246h1v19h-1zM240 266h1v19h-1zM241 172h1v186h-1zM242 357h1v48h-1zM243 190h1v209h-1zM244 167h1v18h-1zM244 186h1v7h-1zM245 192h1v213h-1zM246 337h1v64h-1zM247 167h1v171h-1zM248 172h1v1h-1zM248 174h1v2h-1zM248 177h1v2h-1zM248 180h1v2h-1zM248 183h1v2h-1zM248 186h1v2h-1zM248 189h1v2h-1zM248 192h1v2h-1zM248 195h1v2h-1zM248 198h1v2h-1zM248 201h1v2h-1zM248 204h1v1h-1zM248 207h1v2h-1zM248 210h1v2h-1zM248 213h1v2h-1zM248 216h1v2h-1zM248 219h1v2h-1zM248 222h1v2h-1zM248 226h1v1h-1zM248 228h1v2h-1zM248 231h1v2h-1zM248 234h1v2h-1zM248 237h1v2h-1zM248 240h1v2h-1zM248 243h1v2h-1zM248 246h1v2h-1zM248 249h1v2h-1zM248 252h1v2h-1zM248 255h1v2h-1zM248 258h1v2h-1zM248 261h1v2h-1zM248 264h1v1h-1zM248 267h1v2h-1zM249 269h1v136h-1zM250 167h1v135h-1zM251 167h1v172h-1zM252 338h1v7h-1zM252 346h1v19h-1zM252 366h1v19h-1zM252 386h1v19h-1zM253 213h1v193h-1zM254 167h1v47h-1zM255 167h1v239h-1zM257 167h1v239h-1zM258 167h1v11h-1zM259 177h1v229h-1zM260 361h1v4h-1zM260 366h1v19h-1zM260 386h1v19h-1zM261 167h1v195h-1zM262 167h1v67h-1zM263 233h1v173h-1zM264 326h1v19h-1zM264 346h1v19h-1zM264 366h1v19h-1zM264 386h1v19h-1zM265 167h1v159h-1zM266 167h1v107h-1zM267 273h1v133h-1zM268 294h1v2h-1zM268 297h1v2h-1zM268 300h1v2h-1zM268 303h1v2h-1zM268 306h1v2h-1zM268 309h1v2h-1zM268 312h1v2h-1zM268 315h1v2h-1zM268 318h1v2h-1zM268 321h1v2h-1zM268 324h1v1h-1zM268 327h1v2h-1zM268 330h1v2h-1zM268 333h1v2h-1zM268 336h1v2h-1zM268 339h1v2h-1zM268 342h1v2h-1zM268 346h1v1h-1zM268 348h1v2h-1zM268 351h1v2h-1zM268 354h1v2h-1zM268 357h1v2h-1zM268 360h1v2h-1zM268 363h1v2h-1zM268 366h1v2h-1zM268 369h1v2h-1zM268 372h1v2h-1zM268 375h1v2h-1zM268 378h1v2h-1zM268 381h1v2h-1zM268 384h1v1h-1zM268 387h1v2h-1zM268 390h1v2h-1zM268 393h1v2h-1zM268 396h1v2h-1zM268 399h1v2h-1zM268 402h1v2h-1zM269 168h1v127h-1zM270 168h1v137h-1zM270 306h1v9h-1zM271 314h1v92h-1zM272 272h1v13h-1zM272 286h1v19h-1zM272 306h1v19h-1zM272 326h1v19h-1zM272 346h1v19h-1zM272 366h1v19h-1zM272 386h1v19h-1zM273 168h1v105h-1zM274 168h1v137h-1zM274 306h1v32h-1zM275 337h1v69h-1zM276 260h1v5h-1zM276 266h1v19h-1zM276 286h1v19h-1zM276 306h1v19h-1zM276 326h1v19h-1zM276 346h1v19h-1zM276 366h1v19h-1zM276 386h1v19h-1zM277 168h1v93h-1zM278 168h1v137h-1zM278 306h1v40h-1zM279 345h1v61h-1zM280 259h1v6h-1zM280 266h1v19h-1zM280 286h1v19h-1zM280 306h1v19h-1zM280 326h1v19h-1zM280 346h1v19h-1zM280 366h1v19h-1zM280 386h1v19h-1zM281 168h1v92h-1zM282 168h1v137h-1zM282 306h1v36h-1zM283 341h1v65h-1zM284 267h1v18h-1zM284 286h1v19h-1zM284 306h1v19h-1zM284 326h1v19h-1zM284 346h1v19h-1zM284 366h1v19h-1zM284 386h1v19h-1zM285 168h1v100h-1zM286 168h1v137h-1zM286 306h1v20h-1zM287 325h1v81h-1zM288 284h1v1h-1zM288 286h1v1h-1zM288 288h1v1h-1zM288 290h1v1h-1zM288 292h1v1h-1zM288 294h1v1h-1zM288 296h1v1h-1zM288 298h1v1h-1zM288 300h1v1h-1zM288 302h1v1h-1zM288 304h1v1h-1zM288 306h1v1h-1zM288 308h1v1h-1zM288 310h1v1h-1zM288 312h1v1h-1zM288 314h1v1h-1zM288 316h1v1h-1zM288 318h1v1h-1zM288 320h1v1h-1zM288 322h1v1h-1zM288 324h1v1h-1zM288 326h1v1h-1zM288 328h1v1h-1zM288 330h1v1h-1zM288 332h1v1h-1zM288 334h1v1h-1zM288 336h1v1h-1zM288 338h1v1h-1zM288 340h1v1h-1zM288 342h1v1h-1zM288 344h1v1h-1zM288 346h1v1h-1zM288 348h1v1h-1zM288 350h1v1h-1zM288 352h1v1h-1zM288 354h1v1h-1zM288 356h1v1h-1zM288 358h1v1h-1zM288 360h1v1h-1zM288 362h1v1h-1zM288 364h1v1h-1zM288 366h1v1h-1zM288 368h1v1h-1zM288 370h1v1h-1zM288 372h1v1h-1zM288 374h1v1h-1zM288 376h1v1h-1zM288 378h1v1h-1zM288 380h1v1h-1zM288 382h1v1h-1zM288 384h1v1h-1zM288 386h1v1h-1zM288 388h1v1h-1zM288 390h1v1h-1zM288 392h1v1h-1zM288 394h1v1h-1zM288 396h1v1h-1zM288 398h1v1h-1zM288 400h1v1h-1zM288 402h1v1h-1zM288 404h1v1h-1zM289 168h1v117h-1zM290 168h1v125h-1zM291 292h1v114h-1zM292 311h1v14h-1zM292 326h1v19h-1zM292 346h1v19h-1zM292 366h1v19h-1zM292 386h1v19h-1zM293 168h1v144h-1zM294 168h1v83h-1zM295 250h1v156h-1zM296 343h1v2h-1zM296 346h1v19h-1zM296 366h1v19h-1zM296 386h1v19h-1zM297 168h1v176h-1zM298 168h1v45h-1zM299 212h1v194h-1zM300 384h1v1h-1zM300 386h1v19h-1zM301 168h1v217h-1zM302 168h1v1h-1zM303 168h1v238h-1zM305 207h1v199h-1zM306 168h1v40h-1zM307 168h1v185h-1zM308 352h1v1h-1zM308 354h1v2h-1zM308 357h1v2h-1zM308 360h1v2h-1zM308 363h1v2h-1zM308 366h1v2h-1zM308 369h1v2h-1zM308 372h1v2h-1zM308 375h1v2h-1zM308 378h1v2h-1zM308 381h1v2h-1zM308 384h1v1h-1zM308 387h1v2h-1zM308 390h1v2h-1zM308 393h1v2h-1zM308 396h1v2h-1zM308 399h1v2h-1zM308 402h1v2h-1zM309 286h1v120h-1zM310 168h1v119h-1zM311 168h1v90h-1zM312 257h1v8h-1zM312 266h1v19h-1zM312 286h1v19h-1zM312 306h1v19h-1zM312 326h1v19h-1zM312 346h1v19h-1zM312 366h1v19h-1zM312 386h1v19h-1zM313 350h1v56h-1zM314 168h1v137h-1zM314 306h1v45h-1zM315 168h1v11h-1zM316 178h1v7h-1zM316 186h1v19h-1zM316 206h1v19h-1zM316 226h1v19h-1zM316 246h1v19h-1zM316 266h1v19h-1zM316 286h1v19h-1zM316 306h1v19h-1zM316 326h1v19h-1zM316 346h1v19h-1zM316 366h1v19h-1zM316 386h1v19h-1zM317 405h1v1h-1zM318 210h1v95h-1zM318 306h1v100h-1zM319 168h1v43h-1zM320 168h1v17h-1zM320 186h1v19h-1zM320 206h1v19h-1zM320 226h1v19h-1zM320 246h1v19h-1zM320 266h1v19h-1zM320 286h1v19h-1zM320 306h1v19h-1zM320 326h1v7h-1zM321 332h1v68h-1zM322 331h1v69h-1zM323 168h1v164h-1zM324 168h1v1h-1zM325 168h1v199h-1zM326 366h1v33h-1zM327 323h1v76h-1zM328 168h1v2h-1zM328 171h1v2h-1zM328 174h1v2h-1zM328 177h1v2h-1zM328 180h1v2h-1zM328 183h1v2h-1zM328 186h1v2h-1zM328 189h1v2h-1zM328 192h1v2h-1zM328 195h1v2h-1zM328 198h1v2h-1zM328 201h1v2h-1zM328 204h1v1h-1zM328 207h1v2h-1zM328 210h1v2h-1zM328 213h1v2h-1zM328 216h1v2h-1zM328 219h1v2h-1zM328 222h1v2h-1zM328 226h1v1h-1zM328 228h1v2h-1zM328 231h1v2h-1zM328 234h1v2h-1zM328 237h1v2h-1zM328 240h1v2h-1zM328 243h1v2h-1zM328 246h1v2h-1zM328 249h1v2h-1zM328 252h1v2h-1zM328 255h1v2h-1zM328 258h1v2h-1zM328 261h1v2h-1zM328 264h1v1h-1zM328 267h1v2h-1zM328 270h1v2h-1zM328 273h1v2h-1zM328 276h1v2h-1zM328 279h1v2h-1zM328 282h1v2h-1zM328 286h1v1h-1zM328 288h1v2h-1zM328 291h1v2h-1zM328 294h1v2h-1zM328 297h1v2h-1zM328 300h1v2h-1zM328 303h1v2h-1zM328 306h1v2h-1zM328 309h1v2h-1zM328 312h1v2h-1zM328 315h1v2h-1zM328 318h1v2h-1zM328 321h1v2h-1zM329 168h1v4h-1zM330 171h1v134h-1zM330 306h1v68h-1zM331 373h1v26h-1zM332 315h1v10h-1zM332 326h1v19h-1zM332 346h1v19h-1zM332 366h1v19h-1zM332 386h1v13h-1zM333 168h1v148h-1zM334 168h1v2h-1zM335 169h1v169h-1zM336 332h1v13h-1zM336 346h1v19h-1zM336 366h1v19h-1zM336 386h1v19h-1zM337 376h1v23h-1zM338 239h1v66h-1zM338 306h1v71h-1zM339 167h1v73h-1zM340 173h1v12h-1zM340 186h1v7h-1zM341 192h1v149h-1zM342 340h1v65h-1zM343 383h1v16h-1zM344 284h1v1h-1zM344 286h1v19h-1zM344 306h1v19h-1zM344 326h1v19h-1zM344 346h1v19h-1zM344 366h1v19h-1zM344 386h1v9h-1zM345 166h1v119h-1zM346 167h1v17h-1zM347 172h1v104h-1zM348 276h1v2h-1zM348 279h1v2h-1zM348 282h1v2h-1zM348 286h1v1h-1zM348 288h1v2h-1zM348 291h1v2h-1zM348 294h1v2h-1zM348 297h1v2h-1zM348 300h1v2h-1zM348 303h1v2h-1zM348 306h1v2h-1zM348 309h1v2h-1zM348 312h1v2h-1zM348 315h1v2h-1zM348 318h1v2h-1zM348 321h1v2h-1zM348 324h1v1h-1zM348 327h1v2h-1zM348 330h1v2h-1zM348 333h1v2h-1zM348 336h1v2h-1zM348 339h1v2h-1zM348 342h1v2h-1zM348 346h1v1h-1zM348 348h1v2h-1zM348 351h1v2h-1zM348 354h1v2h-1zM348 357h1v2h-1zM348 360h1v2h-1zM348 363h1v2h-1zM348 366h1v2h-1zM348 369h1v2h-1zM348 372h1v2h-1zM348 375h1v2h-1zM348 378h1v2h-1zM348 381h1v2h-1zM348 384h1v1h-1zM348 387h1v2h-1zM348 390h1v2h-1zM348 393h1v2h-1zM348 396h1v2h-1zM348 399h1v2h-1zM348 402h1v2h-1zM349 383h1v21h-1zM350 312h1v87h-1zM351 179h1v134h-1zM352 166h1v18h-1zM353 172h1v31h-1zM354 202h1v103h-1zM354 306h1v5h-1zM355 310h1v89h-1zM356 386h1v19h-1zM357 382h1v17h-1zM358 313h1v80h-1zM359 211h1v103h-1zM360 166h1v19h-1zM360 186h1v19h-1zM360 206h1v6h-1zM361 172h1v11h-1zM362 171h1v73h-1zM363 243h1v122h-1zM364 364h1v1h-1zM364 366h1v19h-1zM364 386h1v19h-1zM365 382h1v14h-1zM366 324h1v75h-1zM367 215h1v110h-1zM368 166h1v1h-1zM368 168h1v2h-1zM368 171h1v2h-1zM368 174h1v2h-1zM368 177h1v2h-1zM368 180h1v2h-1zM368 183h1v2h-1zM368 186h1v2h-1zM368 189h1v2h-1zM368 192h1v2h-1zM368 195h1v2h-1zM368 198h1v2h-1zM368 201h1v2h-1zM368 204h1v1h-1zM368 207h1v2h-1zM368 210h1v2h-1zM368 213h1v2h-1zM369 172h1v10h-1zM370 171h1v76h-1zM371 246h1v120h-1zM372 366h1v19h-1zM372 386h1v19h-1zM373 382h1v13h-1zM374 333h1v66h-1zM375 231h1v103h-1zM376 164h1v1h-1zM376 166h1v19h-1zM376 186h1v19h-1zM376 206h1v19h-1zM376 226h1v6h-1zM377 168h1v14h-1zM378 170h1v31h-1zM379 200h1v95h-1zM380 294h1v11h-1zM380 306h1v19h-1zM380 326h1v19h-1zM380 346h1v19h-1zM380 366h1v19h-1zM381 384h1v21h-1zM382 382h1v10h-1zM383 352h1v47h-1zM384 280h1v5h-1zM384 286h1v19h-1zM384 306h1v19h-1zM384 326h1v19h-1zM384 346h1v7h-1zM385 187h1v94h-1zM386 164h1v24h-1zM387 172h1v9h-1zM388 170h1v1h-1zM388 172h1v1h-1zM388 174h1v1h-1zM388 176h1v1h-1zM388 178h1v1h-1zM388 180h1v1h-1zM388 182h1v1h-1zM388 184h1v1h-1zM388 186h1v1h-1zM388 188h1v1h-1zM388 190h1v1h-1zM388 192h1v1h-1zM388 194h1v1h-1zM388 196h1v1h-1zM388 198h1v1h-1zM388 200h1v1h-1zM388 202h1v1h-1zM388 204h1v1h-1zM388 206h1v1h-1zM388 208h1v1h-1zM388 210h1v1h-1zM389 210h1v88h-1zM390 297h1v8h-1zM390 306h1v76h-1zM391 381h1v23h-1zM392 381h1v4h-1zM392 386h1v8h-1zM393 372h1v26h-1zM394 304h1v1h-1zM394 306h1v67h-1zM395 217h1v88h-1zM396 163h1v2h-1zM396 166h1v19h-1zM396 186h1v19h-1zM396 206h1v12h-1zM397 165h1v16h-1zM398 169h1v12h-1zM399 172h1v68h-1zM400 239h1v6h-1zM400 246h1v19h-1zM400 266h1v19h-1zM400 286h1v19h-1zM400 306h1v19h-1zM400 326h1v2h-1zM401 327h1v67h-1zM402 389h1v14h-1zM403 381h1v9h-1zM404 367h1v18h-1zM404 386h1v11h-1zM405 304h1v64h-1zM406 221h1v84h-1zM407 163h1v59h-1zM408 163h1v1h-1zM408 166h1v1h-1zM408 168h1v2h-1zM408 171h1v2h-1zM408 174h1v2h-1zM409 171h1v9h-1zM410 168h1v37h-1zM411 204h1v67h-1zM412 270h1v15h-1zM412 286h1v19h-1zM412 306h1v19h-1zM412 326h1v19h-1zM412 346h1v8h-1zM413 353h1v50h-1zM414 387h1v16h-1zM415 380h1v8h-1zM416 379h1v6h-1zM416 386h1v11h-1zM417 322h1v58h-1zM418 264h1v41h-1zM418 306h1v17h-1zM419 188h1v77h-1zM420 162h1v3h-1zM420 166h1v19h-1zM420 186h1v3h-1zM421 166h1v13h-1zM422 169h1v10h-1zM423 168h1v49h-1zM424 216h1v9h-1zM424 226h1v19h-1zM424 246h1v19h-1zM424 266h1v17h-1zM425 282h1v78h-1zM426 359h1v43h-1zM427 386h1v15h-1zM428 379h1v1h-1zM428 381h1v2h-1zM428 384h1v1h-1zM428 387h1v1h-1zM429 377h1v19h-1zM430 322h1v56h-1zM431 265h1v58h-1zM432 191h1v14h-1zM432 206h1v19h-1zM432 226h1v19h-1zM432 246h1v19h-1zM433 161h1v31h-1zM434 164h1v13h-1zM435 170h1v9h-1zM436 167h1v18h-1zM436 186h1v3h-1zM437 188h1v60h-1zM438 247h1v58h-1zM438 306h1v12h-1zM439 317h1v58h-1zM440 374h1v11h-1zM440 386h1v15h-1zM441 384h1v14h-1zM442 379h1v7h-1zM443 385h1v10h-1zM444 337h1v8h-1zM444 346h1v19h-1zM444 366h1v19h-1zM444 386h1v1h-1zM445 290h1v48h-1zM446 227h1v64h-1zM447 176h1v52h-1zM448 160h1v1h-1zM448 162h1v2h-1zM448 166h1v1h-1zM448 168h1v2h-1zM448 171h1v2h-1zM448 174h1v2h-1zM449 166h1v12h-1zM450 169h1v9h-1zM451 166h1v18h-1zM452 183h1v2h-1zM452 186h1v19h-1zM452 206h1v19h-1zM452 226h1v11h-1zM453 236h1v58h-1zM454 293h1v12h-1zM454 306h1v48h-1zM455 353h1v39h-1zM456 391h1v10h-1zM457 380h1v12h-1zM458 378h1v9h-1zM459 382h1v13h-1zM460 338h1v7h-1zM460 346h1v19h-1zM460 366h1v17h-1zM461 297h1v42h-1zM462 246h1v52h-1zM463 188h1v59h-1zM464 160h1v5h-1zM464 166h1v19h-1zM464 186h1v3h-1zM465 160h1v11h-1zM466 170h1v7h-1zM467 167h1v8h-1zM468 166h1v1h-1zM468 168h1v2h-1zM468 171h1v2h-1zM468 174h1v2h-1zM468 177h1v2h-1zM468 180h1v2h-1zM468 183h1v2h-1zM468 186h1v2h-1zM468 189h1v2h-1zM468 192h1v1h-1zM469 192h1v50h-1zM470 241h1v56h-1zM471 296h1v56h-1zM472 351h1v14h-1zM472 366h1v19h-1zM472 386h1v2h-1zM473 387h1v13h-1zM474 382h1v12h-1zM475 377h1v6h-1zM476 382h1v3h-1zM476 386h1v7h-1zM477 360h1v34h-1zM478 320h1v41h-1zM479 279h1v42h-1zM480 226h1v19h-1zM480 246h1v19h-1zM480 266h1v14h-1zM481 181h1v45h-1zM482 159h1v23h-1zM483 161h1v10h-1zM484 170h1v7h-1zM485 167h1v8h-1zM486 165h1v17h-1zM487 181h1v46h-1zM488 226h1v1h-1zM488 228h1v1h-1zM488 230h1v1h-1zM488 232h1v1h-1zM488 234h1v1h-1zM488 236h1v1h-1zM488 238h1v1h-1zM488 240h1v1h-1zM488 242h1v1h-1zM488 244h1v1h-1zM488 246h1v1h-1zM488 248h1v1h-1zM488 250h1v1h-1zM488 252h1v1h-1zM488 254h1v1h-1zM488 256h1v1h-1zM488 258h1v1h-1zM488 260h1v1h-1zM488 262h1v1h-1zM488 264h1v1h-1zM489 264h1v58h-1zM490 321h1v44h-1zM491 364h1v30h-1zM492 391h1v9h-1zM493 382h1v10h-1zM494 377h1v6h-1zM495 381h1v10h-1zM496 373h1v12h-1zM496 386h1v8h-1zM497 335h1v39h-1zM498 302h1v3h-1zM498 306h1v30h-1zM499 263h1v40h-1zM500 211h1v14h-1zM500 226h1v19h-1zM500 246h1v18h-1zM501 176h1v36h-1zM502 159h1v18h-1zM503 161h1v10h-1zM504 170h1v7h-1zM505 169h1v7h-1zM506 165h1v10h-1zM507 174h1v35h-1zM508 208h1v1h-1zM508 210h1v2h-1zM508 213h1v2h-1zM508 216h1v2h-1zM508 219h1v2h-1zM508 222h1v2h-1zM508 226h1v1h-1zM508 228h1v2h-1zM508 231h1v2h-1zM508 234h1v2h-1zM508 237h1v2h-1zM508 240h1v2h-1zM508 243h1v2h-1zM509 245h1v47h-1zM510 291h1v14h-1zM510 306h1v34h-1zM511 339h1v36h-1zM512 374h1v11h-1zM512 386h1v14h-1zM513 390h1v10h-1zM514 381h1v10h-1zM515 377h1v5h-1zM516 380h1v5h-1zM516 386h1v4h-1zM517 379h1v15h-1zM518 344h1v36h-1zM519 314h1v31h-1zM520 280h1v5h-1zM520 286h1v11h-1zM520 298h1v4h-1zM520 303h1v2h-1zM520 306h1v9h-1zM521 238h1v43h-1zM522 195h1v44h-1zM523 168h1v28h-1zM524 159h1v6h-1zM524 166h1v3h-1zM525 163h1v9h-1zM526 171h1v6h-1zM527 169h1v6h-1zM528 166h1v1h-1zM528 168h1v2h-1zM529 169h1v25h-1zM530 193h1v38h-1zM531 230h1v31h-1zM532 260h1v5h-1zM532 266h1v19h-1zM532 286h1v19h-1zM532 306h1v3h-1zM533 308h1v40h-1zM534 347h1v29h-1zM535 375h1v24h-1zM536 391h1v9h-1zM537 384h1v8h-1zM538 377h1v8h-1zM539 377h1v8h-1zM540 384h1v1h-1zM540 386h1v6h-1zM541 372h1v21h-1zM542 341h1v32h-1zM543 314h1v28h-1zM544 284h1v1h-1zM544 286h1v8h-1zM544 295h1v2h-1zM544 299h1v3h-1zM544 303h1v2h-1zM544 306h1v9h-1zM545 252h1v33h-1zM546 209h1v44h-1zM547 179h1v31h-1zM548 159h1v2h-1zM548 162h1v2h-1zM548 166h1v1h-1zM548 168h1v2h-1zM548 171h1v2h-1zM548 174h1v2h-1zM548 177h1v2h-1zM549 159h1v7h-1zM550 165h1v7h-1zM551 171h1v5h-1zM552 169h1v6h-1zM553 165h1v5h-1zM554 165h1v19h-1zM555 183h1v36h-1zM556 218h1v7h-1zM556 226h1v19h-1zM557 244h1v35h-1zM558 278h1v27h-1zM558 306h1v13h-1zM559 318h1v35h-1zM560 352h1v13h-1zM560 366h1v11h-1zM561 376h1v21h-1zM562 393h1v6h-1zM563 386h1v8h-1zM564 379h1v6h-1zM564 386h1v1h-1zM565 376h1v5h-1zM566 380h1v8h-1zM567 387h1v6h-1zM568 367h1v1h-1zM568 369h1v2h-1zM568 372h1v2h-1zM568 375h1v2h-1zM568 378h1v2h-1zM568 381h1v2h-1zM568 384h1v1h-1zM568 387h1v2h-1zM568 390h1v2h-1zM569 340h1v28h-1zM570 316h1v25h-1zM571 290h1v7h-1zM571 303h1v14h-1zM572 262h1v3h-1zM572 266h1v19h-1zM572 286h1v5h-1zM573 223h1v40h-1zM574 192h1v32h-1zM575 171h1v22h-1zM576 158h1v7h-1zM576 166h1v6h-1zM577 160h1v7h-1zM578 166h1v7h-1zM579 172h1v4h-1zM580 170h1v5h-1zM581 166h1v5h-1zM582 164h1v10h-1zM583 173h1v21h-1zM584 193h1v12h-1zM584 206h1v19h-1zM585 224h1v22h-1zM586 245h1v30h-1zM587 274h1v37h-1zM588 310h1v1h-1zM588 312h1v1h-1zM588 314h1v1h-1zM588 316h1v1h-1zM588 318h1v1h-1zM588 320h1v1h-1zM588 322h1v1h-1zM588 324h1v1h-1zM588 326h1v1h-1zM588 328h1v1h-1zM588 330h1v1h-1zM588 332h1v1h-1zM588 334h1v1h-1zM588 336h1v1h-1zM588 338h1v1h-1zM588 340h1v1h-1zM589 341h1v25h-1zM590 365h1v19h-1zM591 383h1v16h-1zM592 392h1v7h-1zM593 386h1v7h-1zM594 380h1v7h-1zM595 376h1v5h-1zM596 378h1v6h-1zM597 383h1v7h-1zM598 385h1v8h-1zM599 364h1v22h-1zM600 340h1v5h-1zM600 346h1v19h-1zM601 320h1v21h-1zM602 299h1v6h-1zM602 306h1v15h-1zM603 275h1v25h-1zM604 249h1v16h-1zM604 266h1v10h-1zM605 214h1v36h-1zM606 189h1v26h-1zM607 172h1v18h-1zM608 159h1v2h-1zM608 162h1v2h-1zM608 166h1v1h-1zM608 168h1v2h-1zM608 171h1v2h-1zM609 159h1v6h-1zM610 164h1v6h-1zM611 169h1v6h-1zM612 173h1v3h-1zM613 169h1v5h-1zM614 165h1v5h-1zM615 164h1v10h-1zM616 173h1v12h-1zM616 186h1v3h-1zM617 188h1v30h-1zM618 217h1v21h-1zM619 237h1v22h-1zM620 258h1v7h-1zM620 266h1v19h-1zM620 286h1v5h-1zM621 290h1v31h-1zM622 320h1v28h-1zM623 347h1v21h-1zM624 367h1v17h-1zM625 383h1v16h-1zM626 393h1v6h-1zM627 388h1v6h-1zM628 382h1v1h-1zM628 384h1v1h-1zM628 387h1v2h-1zM629 377h1v6h-1zM630 376h1v5h-1zM631 380h1v5h-1zM632 384h1v1h-1zM632 386h1v4h-1zM633 384h1v9h-1zM634 366h1v19h-1zM635 344h1v23h-1zM636 326h1v19h-1zM637 307h1v19h-1zM638 286h1v19h-1zM638 306h1v2h-1zM639 265h1v22h-1zM640 237h1v8h-1zM640 246h1v19h-1zM641 209h1v29h-1zM642 186h1v24h-1zM643 172h1v15h-1zM644 158h1v7h-1zM644 166h1v7h-1zM645 158h1v5h-1zM646 162h1v6h-1zM647 167h1v5h-1zM648 171h1v2h-1zM648 174h1v2h-1zM649 171h1v4h-1zM650 168h1v4h-1zM651 165h1v4h-1zM652 164h1v1h-1zM652 166h1v5h-1zM653 170h1v13h-1zM654 182h1v22h-1zM655 203h1v23h-1zM656 226h1v16h-1zM657 241h1v19h-1zM658 259h1v28h-1zM659 286h1v28h-1zM660 313h1v12h-1zM660 326h1v11h-1zM661 336h1v20h-1zM662 355h1v18h-1zM663 372h1v14h-1zM664 386h1v13h-1zM665 393h1v6h-1zM666 389h1v5h-1zM667 385h1v5h-1zM668 381h1v2h-1zM668 384h1v1h-1zM669 376h1v5h-1zM670 376h1v5h-1zM671 380h1v5h-1zM672 384h1v1h-1zM672 386h1v3h-1zM673 388h1v5h-1zM674 376h1v16h-1zM675 359h1v18h-1zM676 341h1v4h-1zM676 346h1v14h-1zM677 325h1v17h-1zM678 310h1v16h-1zM679 293h1v18h-1zM680 275h1v10h-1zM680 286h1v8h-1zM681 257h1v19h-1zM682 230h1v28h-1zM683 207h1v24h-1zM684 188h1v17h-1zM684 206h1v2h-1zM685 175h1v14h-1zM686 163h1v13h-1zM687 158h1v6h-1zM688 160h1v1h-1zM688 162h1v1h-1zM689 163h1v5h-1zM690 167h1v5h-1zM691 171h1v4h-1zM692 172h1v3h-1zM693 169h1v4h-1zM694 166h1v4h-1zM695 164h1v3h-1zM696 164h1v1h-1zM696 166h1v9h-1zM697 174h1v11h-1zM698 184h1v23h-1zM699 206h1v20h-1zM700 226h1v15h-1zM701 240h1v15h-1zM702 254h1v26h-1zM703 279h1v26h-1zM704 304h1v1h-1zM704 306h1v19h-1zM705 325h1v21h-1zM706 345h1v17h-1zM707 361h1v13h-1zM708 373h1v1h-1zM708 375h1v2h-1zM708 378h1v2h-1zM708 381h1v2h-1zM709 382h1v9h-1zM710 390h1v8h-1zM711 397h1v1h-1zM712 391h1v6h-1zM713 385h1v7h-1zM714 381h1v5h-1zM715 377h1v5h-1zM716 375h1v3h-1zM717 375h1v4h-1zM718 378h1v4h-1zM719 382h1v4h-1zM720 386h1v3h-1zM721 385h1v6h-1zM722 375h1v11h-1zM723 383h1v9h-1zM724 391h1v1h-1zM725 377h1v14h-1zM726 377h1v8h-1zM727 385h1v10h-1zM728 394h1v1h-1zM728 396h1v2h-1zM729 398h1v1h-1zM730 258h1v47h-1zM730 306h1v93h-1zM731 257h1v2h-1zM732 257h1v2h-1zM733 258h1v2h-1zM734 259h1v1h-1zM735 259h1v1h-1zM736 259h1v2h-1zM737 260h1v2h-1zM738 260h1v2h-1zM739 260h1v2h-1zM740 260h1v2h-1zM741 260h1v2h-1zM742 260h1v2h-1zM743 260h1v2h-1zM744 260h1v2h-1zM745 260h1v2h-1zM746 260h1v2h-1zM747 260h1v2h-1zM748 261h1v1h-1zM749 260h1v2h-1zM750 260h1v2h-1zM751 260h1v2h-1zM752 260h1v2h-1zM753 260h1v2h-1zM754 260h1v2h-1zM755 260h1v2h-1zM756 260h1v2h-1zM757 260h1v2h-1zM758 260h1v2h-1zM759 260h1v2h-1zM760 260h1v2h-1zM761 260h1v2h-1zM762 260h1v2h-1zM763 260h1v2h-1zM764 260h1v2h-1zM765 260h1v2h-1zM766 260h1v2h-1zM767 260h1v2h-1zM768 261h1v1h-1zM769 260h1v2h-1zM770 260h1v3h-1zM771 260h1v3h-1zM772 260h1v2h-1zM773 260h1v2h-1zM774 260h1v2h-1zM775 260h1v2h-1zM776 260h1v2h-1zM777 260h1v2h-1zM778 260h1v2h-1zM779 260h1v2h-1zM780 260h1v2h-1zM781 260h1v2h-1zM782 260h1v2h-1zM783 260h1v2h-1zM784 260h1v2h-1zM785 260h1v2h-1zM786 260h1v2h-1zM787 260h1v2h-1zM788 260h1v1h-1zM789 260h1v2h-1zM790 260h1v2h-1zM791 260h1v2h-1z"/>
<path fill="#ffff40" d="M88 39h1v1h-1zM88 41h1v1h-1zM88 43h1v1h-1zM88 45h1v1h-1zM88 47h1v1h-1zM88 49h1v1h-1zM88 51h1v1h-1zM88 53h1v1h-1zM88 55h1v1h-1zM88 57h1v1h-1zM88 59h1v1h-1zM88 61h1v1h-1zM88 63h1v1h-1zM88 65h1v1h-1zM88 67h1v1h-1zM88 69h1v1h-1zM88 71h1v1h-1zM88 73h1v1h-1zM88 75h1v1h-1zM88 77h1v1h-1zM88 79h1v1h-1zM88 81h1v1h-1zM88 83h1v1h-1zM88 85h1v1h-1zM88 87h1v1h-1zM88 89h1v1h-1zM88 91h1v1h-1zM88 93h1v1h-1zM88 95h1v1h-1zM88 97h1v1h-1zM88 99h1v1h-1zM88 101h1v1h-1zM88 103h1v1h-1zM88 105h1v1h-1zM88 107h1v1h-1zM88 109h1v1h-1zM88 111h1v1h-1zM88 113h1v1h-1zM88 115h1v1h-1zM88 117h1v1h-1zM88 119h1v1h-1zM88 121h1v1h-1zM88 123h1v1h-1zM88 125h1v1h-1zM88 127h1v1h-1zM88 129h1v1h-1zM88 131h1v1h-1zM88 133h1v1h-1zM88 135h1v1h-1zM88 137h1v1h-1zM88 139h1v1h-1zM88 141h1v1h-1zM88 143h1v1h-1zM88 145h1v1h-1zM88 147h1v1h-1zM88 149h1v1h-1zM88 151h1v1h-1zM88 153h1v1h-1zM88 155h1v1h-1zM88 157h1v1h-1zM88 159h1v1h-1zM88 161h1v1h-1zM88 163h1v1h-1zM88 165h1v1h-1zM88 167h1v1h-1zM88 169h1v1h-1zM88 171h1v1h-1zM88 173h1v1h-1zM88 175h1v1h-1zM88 177h1v1h-1zM88 179h1v1h-1zM88 181h1v1h-1zM88 183h1v1h-1zM88 185h1v1h-1zM88 187h1v1h-1zM88 189h1v1h-1zM88 191h1v1h-1zM88 193h1v1h-1zM88 195h1v1h-1zM88 197h1v1h-1zM88 199h1v1h-1zM88 201h1v1h-1zM88 203h1v1h-1zM88 205h1v1h-1zM88 207h1v1h-1zM88 209h1v1h-1zM88 211h1v1h-1zM88 213h1v1h-1zM88 215h1v1h-1zM88 217h1v1h-1zM88 219h1v1h-1zM88 221h1v1h-1zM88 223h1v1h-1zM88 225h1v1h-1zM88 227h1v1h-1zM88 229h1v1h-1zM88 231h1v1h-1zM88 233h1v1h-1zM88 235h1v1h-1zM88 237h1v1h-1zM88 239h1v1h-1zM88 241h1v1h-1zM88 243h1v1h-1zM88 245h1v1h-1zM88 247h1v1h-1zM88 249h1v1h-1zM88 251h1v1h-1zM88 253h1v1h-1zM88 255h1v1h-1zM88 257h1v1h-1zM88 259h1v1h-1zM88 261h1v1h-1zM88 263h1v1h-1zM88 265h1v1h-1zM88 267h1v1h-1zM88 269h1v1h-1zM88 271h1v1h-1zM88 273h1v1h-1zM88 275h1v1h-1zM88 277h1v1h-1zM88 279h1v1h-1zM88 281h1v1h-1zM88 283h1v1h-1zM88 285h1v1h-1zM88 287h1v1h-1zM88 289h1v1h-1zM88 291h1v1h-1zM88 293h1v1h-1zM88 295h1v1h-1zM88 297h1v1h-1zM88 299h1v1h-1zM88 301h1v1h-1zM88 303h1v1h-1zM88 305h1v1h-1zM88 307h1v1h-1zM88 309h1v1h-1zM88 311h1v1h-1zM88 313h1v1h-1zM88 315h1v1h-1zM88 317h1v1h-1zM88 319h1v1h-1zM88 321h1v1h-1zM88 323h1v1h-1zM88 325h1v1h-1zM88 327h1v1h-1zM88 329h1v1h-1zM88 331h1v1h-1zM88 333h1v1h-1zM88 335h1v1h-1zM88 337h1v1h-1zM88 339h1v1h-1zM88 341h1v1h-1zM88 343h1v1h-1zM88 345h1v1h-1zM88 347h1v1h-1zM88 349h1v1h-1zM88 351h1v1h-1zM88 353h1v1h-1zM88 355h1v1h-1zM88 357h1v1h-1zM88 359h1v1h-1zM88 361h1v1h-1zM88 363h1v1h-1zM88 365h1v1h-1zM88 367h1v1h-1zM88 369h1v1h-1zM88 371h1v1h-1zM88 373h1v1h-1zM88 375h1v1h-1zM88 377h1v1h-1zM88 379h1v1h-1zM88 381h1v1h-1zM88 383h1v1h-1zM88 385h1v1h-1zM88 387h1v1h-1zM88 389h1v1h-1zM88 391h1v1h-1zM88 393h1v1h-1zM88 395h1v1h-1zM88 397h1v1h-1zM88 399h1v1h-1zM88 401h1v1h-1zM88 403h1v1h-1zM88 405h1v1h-1zM88 407h1v1h-1zM88 409h1v1h-1zM88 411h1v1h-1zM88 413h1v1h-1zM88 415h1v1h-1zM88 417h1v1h-1zM88 419h1v1h-1zM88 421h1v1h-1zM88 423h1v1h-1zM88 425h1v1h-1zM88 427h1v1h-1zM88 429h1v1h-1zM88 431h1v1h-1zM88 433h1v1h-1zM88 435h1v1h-1zM88 437h1v1h-1zM88 439h1v1h-1zM88 441h1v1h-1zM88 443h1v1h-1zM88 445h1v1h-1zM88 447h1v1h-1zM88 449h1v1h-1zM88 451h1v1h-1zM88 453h1v1h-1zM88 455h1v1h-1zM88 457h1v1h-1zM88 459h1v1h-1zM88 461h1v1h-1zM88 463h1v1h-1zM88 465h1v1h-1zM88 467h1v1h-1zM88 469h1v1h-1zM88 471h1v1h-1zM88 473h1v1h-1zM88 475h1v1h-1zM88 477h1v1h-1zM88 479h1v1h-1zM88 481h1v1h-1zM88 483h1v1h-1zM88 485h1v1h-1zM88 487h1v1h-1zM88 489h1v1h-1zM88 491h1v1h-1zM88 493h1v1h-1zM88 495h1v1h-1zM88 497h1v1h-1zM88 499h1v1h-1zM88 501h1v1h-1zM88 503h1v1h-1zM88 505h1v1h-1zM88 507h1v1h-1zM88 509h1v1h-1zM88 511h1v1h-1zM88 513h1v1h-1zM88 515h1v1h-1zM88 517h1v1h-1zM88 519h1v1h-1zM88 521h1v1h-1zM88 523h1v1h-1zM88 525h1v1h-1zM88 527h1v1h-1zM88 529h1v1h-1zM88 531h1v1h-1zM88 533h1v1h-1zM88 535h1v1h-1zM88 537h1v1h-1zM88 539h1v1h-1zM88 541h1v1h-1zM88 543h1v1h-1zM88 545h1v1h-1zM88 547h1v1h-1zM88 549h1v1h-1zM88 551h1v1h-1zM88 553h1v1h-1zM88 555h1v1h-1zM88 557h1v1h-1zM88 559h1v1h-1zM88 561h1v1h-1zM88 563h1v1h-1zM88 565h1v1h-1zM88 567h1v1h-1zM94 295h1v1h-1zM94 302h1v1h-1zM94 305h1v1h-1zM95 294h1v9h-1zM96 365h1v1h-1zM96 385h1v1h-1zM96 405h1v1h-1zM96 425h1v1h-1zM96 445h1v1h-1zM98 305h1v1h-1zM100 205h1v1h-1zM100 225h1v1h-1zM100 245h1v1h-1zM100 265h1v1h-1zM100 285h1v1h-1zM100 300h1v2h-1zM100 305h1v1h-1zM100 325h1v1h-1zM100 345h1v1h-1zM100 365h1v1h-1zM101 297h1v1h-1zM101 299h1v1h-1zM101 302h1v1h-1zM103 297h1v1h-1zM103 299h1v1h-1zM103 302h1v1h-1zM104 225h1v1h-1zM104 245h1v1h-1zM104 265h1v1h-1zM104 285h1v1h-1zM104 297h1v1h-1zM104 299h1v1h-1zM104 301h1v1h-1zM104 305h1v1h-1zM104 325h1v1h-1zM104 345h1v1h-1zM104 365h1v1h-1zM104 385h1v1h-1zM104 405h1v1h-1zM104 425h1v1h-1zM105 298h1v5h-1zM108 197h1v1h-1zM108 200h1v1h-1zM108 203h1v1h-1zM108 205h1v2h-1zM108 209h1v1h-1zM108 212h1v1h-1zM108 215h1v1h-1zM108 218h1v1h-1zM108 221h1v1h-1zM108 224h1v2h-1zM108 227h1v1h-1zM108 230h1v1h-1zM108 233h1v1h-1zM108 236h1v1h-1zM108 239h1v1h-1zM108 242h1v1h-1zM108 245h1v1h-1zM108 248h1v1h-1zM108 251h1v1h-1zM108 254h1v1h-1zM108 257h1v1h-1zM108 260h1v1h-1zM108 263h1v1h-1zM108 265h1v2h-1zM108 269h1v1h-1zM108 272h1v1h-1zM108 275h1v1h-1zM108 278h1v1h-1zM108 281h1v1h-1zM108 284h1v2h-1zM108 287h1v1h-1zM108 290h1v1h-1zM108 293h1v1h-1zM108 296h1v1h-1zM108 299h1v1h-1zM108 302h1v1h-1zM108 305h1v1h-1zM108 308h1v1h-1zM108 311h1v1h-1zM108 314h1v1h-1zM108 317h1v1h-1zM108 320h1v1h-1zM108 323h1v1h-1zM108 325h1v2h-1zM108 329h1v1h-1zM108 332h1v1h-1zM108 335h1v1h-1zM108 338h1v1h-1zM108 341h1v1h-1zM108 344h1v2h-1zM108 347h1v1h-1zM108 350h1v1h-1zM108 353h1v1h-1zM108 356h1v1h-1zM108 359h1v1h-1zM108 362h1v1h-1zM108 365h1v1h-1zM108 368h1v1h-1zM108 371h1v1h-1zM108 374h1v1h-1zM108 377h1v1h-1zM108 380h1v1h-1zM108 383h1v1h-1zM108 385h1v2h-1zM108 389h1v1h-1zM108 392h1v1h-1zM108 395h1v1h-1zM108 398h1v1h-1zM108 401h1v1h-1zM108 404h1v2h-1zM108 407h1v1h-1zM108 410h1v1h-1zM108 413h1v1h-1zM108 416h1v1h-1zM108 419h1v1h-1zM108 422h1v1h-1zM108 425h1v1h-1zM108 428h1v1h-1zM108 431h1v1h-1zM111 297h1v1h-1zM111 302h1v1h-1zM112 205h1v1h-1zM112 225h1v1h-1zM112 245h1v1h-1zM112 265h1v1h-1zM112 285h1v1h-1zM112 297h1v1h-1zM112 302h1v1h-1zM112 305h1v1h-1zM112 325h1v1h-1zM112 345h1v1h-1zM112 365h1v1h-1zM112 385h1v1h-1zM112 405h1v1h-1zM114 302h1v1h-1zM114 305h1v1h-1zM115 302h1v1h-1zM116 285h1v1h-1zM116 305h1v1h-1zM116 325h1v1h-1zM116 345h1v1h-1zM116 365h1v1h-1zM116 385h1v1h-1zM116 405h1v1h-1zM116 425h1v1h-1zM118 305h1v1h-1zM120 205h1v1h-1zM120 225h1v1h-1zM120 245h1v1h-1zM120 265h1v1h-1zM120 285h1v1h-1zM120 297h1v1h-1zM120 302h1v1h-1zM120 305h1v1h-1zM122 298h1v1h-1zM122 302h1v1h-1zM122 305h1v1h-1zM123 297h1v1h-1zM124 365h1v1h-1zM124 385h1v1h-1zM124 405h1v1h-1zM124 425h1v1h-1zM125 298h1v5h-1zM126 302h1v1h-1zM126 305h1v1h-1zM128 185h1v1h-1zM128 188h1v1h-1zM128 191h1v1h-1zM128 194h1v1h-1zM128 197h1v1h-1zM128 200h1v1h-1zM128 203h1v1h-1zM128 205h1v2h-1zM128 209h1v1h-1zM128 212h1v1h-1zM128 215h1v1h-1zM128 218h1v1h-1zM128 221h1v1h-1zM128 224h1v2h-1zM128 227h1v1h-1zM128 230h1v1h-1zM128 233h1v1h-1zM128 236h1v1h-1zM128 239h1v1h-1zM128 242h1v1h-1zM128 245h1v1h-1zM128 248h1v1h-1zM128 251h1v1h-1zM128 254h1v1h-1zM128 257h1v1h-1zM128 260h1v1h-1zM128 263h1v1h-1zM128 265h1v2h-1zM128 269h1v1h-1zM128 272h1v1h-1zM128 275h1v1h-1zM128 278h1v1h-1zM128 281h1v1h-1zM128 284h1v2h-1zM128 287h1v1h-1zM128 290h1v1h-1zM128 293h1v1h-1zM128 296h1v1h-1zM128 299h1v1h-1zM128 302h1v1h-1zM128 305h1v1h-1zM128 308h1v1h-1zM130 305h1v1h-1zM132 265h1v1h-1zM132 285h1v1h-1zM132 305h1v1h-1zM132 325h1v1h-1zM132 345h1v1h-1zM132 365h1v1h-1zM132 385h1v1h-1zM132 405h1v1h-1zM136 185h1v1h-1zM136 205h1v1h-1zM136 225h1v1h-1zM136 245h1v1h-1zM136 265h1v1h-1zM136 285h1v1h-1zM136 305h1v1h-1zM136 325h1v1h-1zM136 345h1v1h-1zM136 365h1v1h-1zM136 385h1v1h-1zM136 405h1v1h-1zM140 185h1v1h-1zM140 205h1v1h-1zM140 225h1v1h-1zM140 245h1v1h-1zM140 265h1v1h-1zM140 285h1v1h-1zM140 294h1v1h-1zM140 302h1v1h-1zM140 305h1v1h-1zM140 325h1v1h-1zM140 345h1v1h-1zM140 365h1v1h-1zM140 385h1v1h-1zM140 405h1v1h-1zM142 294h1v1h-1zM142 298h1v1h-1zM142 302h1v1h-1zM142 305h1v1h-1zM143 294h1v1h-1zM143 298h1v1h-1zM143 302h1v1h-1zM144 285h1v1h-1zM144 294h1v1h-1zM144 297h1v2h-1zM144 302h1v1h-1zM144 305h1v1h-1zM144 325h1v1h-1zM144 345h1v1h-1zM144 365h1v1h-1zM144 385h1v1h-1zM144 405h1v1h-1zM146 300h1v1h-1zM146 305h1v1h-1zM148 176h1v1h-1zM148 179h1v1h-1zM148 182h1v1h-1zM148 185h1v1h-1zM148 188h1v1h-1zM148 191h1v1h-1zM148 194h1v1h-1zM148 197h1v1h-1zM148 200h1v1h-1zM148 203h1v1h-1zM148 205h1v2h-1zM148 209h1v1h-1zM148 212h1v1h-1zM148 215h1v1h-1zM148 218h1v1h-1zM148 221h1v1h-1zM148 224h1v2h-1zM148 227h1v1h-1zM148 230h1v1h-1zM148 233h1v1h-1zM148 236h1v1h-1zM150 298h1v4h-1zM150 305h1v1h-1zM152 285h1v1h-1zM152 297h1v1h-1zM152 299h1v1h-1zM152 302h1v1h-1zM152 305h1v1h-1zM152 325h1v1h-1zM152 345h1v1h-1zM152 365h1v1h-1zM152 385h1v1h-1zM152 405h1v1h-1zM153 297h1v1h-1zM153 299h1v1h-1zM153 302h1v1h-1zM154 297h1v1h-1zM154 299h1v1h-1zM154 302h1v1h-1zM154 305h1v1h-1zM156 185h1v1h-1zM156 205h1v1h-1zM156 225h1v1h-1zM156 245h1v1h-1zM156 265h1v1h-1zM156 285h1v1h-1zM156 305h1v1h-1zM156 325h1v1h-1zM156 345h1v1h-1zM156 365h1v1h-1zM156 385h1v1h-1zM160 185h1v1h-1zM160 205h1v1h-1zM160 225h1v1h-1zM160 245h1v1h-1zM160 265h1v1h-1zM160 285h1v1h-1zM160 300h1v2h-1zM160 305h1v1h-1zM160 325h1v1h-1zM160 345h1v1h-1zM162 297h1v1h-1zM162 299h1v1h-1zM162 302h1v1h-1zM162 305h1v1h-1zM163 297h1v1h-1zM163 299h1v1h-1zM163 302h1v1h-1zM164 365h1v1h-1zM164 385h1v1h-1zM164 405h1v1h-1zM165 298h1v5h-1zM166 302h1v1h-1zM166 305h1v1h-1zM168 170h1v1h-1zM168 173h1v1h-1zM168 176h1v1h-1zM168 179h1v1h-1zM168 182h1v1h-1zM168 185h1v1h-1zM168 188h1v1h-1zM168 191h1v1h-1zM168 194h1v1h-1zM168 197h1v1h-1zM168 200h1v1h-1zM168 203h1v1h-1zM168 205h1v2h-1zM168 209h1v1h-1zM168 212h1v1h-1zM168 215h1v1h-1zM168 218h1v1h-1zM168 221h1v1h-1zM168 224h1v2h-1zM168 227h1v1h-1zM168 230h1v1h-1zM168 233h1v1h-1zM168 236h1v1h-1zM168 239h1v1h-1zM168 242h1v1h-1zM168 245h1v1h-1zM168 248h1v1h-1zM168 251h1v1h-1zM168 254h1v1h-1zM168 257h1v1h-1zM168 260h1v1h-1zM168 263h1v1h-1zM168 265h1v2h-1zM168 269h1v1h-1zM168 272h1v1h-1zM168 275h1v1h-1zM168 278h1v1h-1zM168 281h1v1h-1zM168 284h1v2h-1zM168 287h1v1h-1zM168 290h1v1h-1zM168 293h1v1h-1zM168 296h1v1h-1zM168 299h1v1h-1zM168 302h1v1h-1zM168 305h1v1h-1zM168 308h1v1h-1zM168 311h1v1h-1zM168 314h1v1h-1zM168 317h1v1h-1zM168 320h1v1h-1zM168 323h1v1h-1zM168 325h1v2h-1zM168 329h1v1h-1zM168 332h1v1h-1zM168 335h1v1h-1zM168 338h1v1h-1zM168 341h1v1h-1zM168 344h1v2h-1zM171 297h1v6h-1zM172 185h1v1h-1zM172 205h1v1h-1zM172 225h1v1h-1zM172 245h1v1h-1zM172 265h1v1h-1zM172 285h1v1h-1zM172 298h1v1h-1zM172 305h1v1h-1zM172 325h1v1h-1zM172 345h1v1h-1zM172 365h1v1h-1zM174 298h1v5h-1zM174 305h1v1h-1zM175 297h1v1h-1zM176 365h1v1h-1zM176 385h1v1h-1zM176 405h1v1h-1zM177 302h1v1h-1zM178 305h1v1h-1zM180 185h1v1h-1zM180 205h1v1h-1zM180 225h1v1h-1zM180 245h1v1h-1zM180 265h1v1h-1zM180 285h1v1h-1zM180 305h1v1h-1zM180 325h1v1h-1zM180 345h1v1h-1zM184 185h1v1h-1zM184 205h1v1h-1zM184 225h1v1h-1zM184 245h1v1h-1zM184 265h1v1h-1zM184 285h1v1h-1zM184 305h1v1h-1zM186 305h1v1h-1zM188 277h1v1h-1zM188 279h1v1h-1zM188 281h1v1h-1zM188 283h1v1h-1zM188 285h1v1h-1zM188 287h1v1h-1zM188 289h1v1h-1zM188 291h1v1h-1zM188 293h1v1h-1zM188 295h1v1h-1zM188 297h1v1h-1zM188 299h1v1h-1zM188 301h1v1h-1zM188 303h1v1h-1zM188 305h1v1h-1zM188 307h1v1h-1zM188 309h1v1h-1zM188 311h1v1h-1zM188 313h1v1h-1zM188 315h1v1h-1zM188 317h1v1h-1zM188 319h1v1h-1zM188 321h1v1h-1zM188 323h1v1h-1zM188 325h1v1h-1zM188 327h1v1h-1zM188 329h1v1h-1zM188 331h1v1h-1zM188 333h1v1h-1zM188 335h1v1h-1zM188 337h1v1h-1zM188 339h1v1h-1zM188 341h1v1h-1zM188 343h1v1h-1zM188 345h1v1h-1zM188 347h1v1h-1zM188 349h1v1h-1zM188 351h1v1h-1zM188 353h1v1h-1zM188 355h1v1h-1zM188 357h1v1h-1zM188 359h1v1h-1zM188 361h1v1h-1zM188 363h1v1h-1zM188 365h1v1h-1zM188 367h1v1h-1zM188 369h1v1h-1zM188 371h1v1h-1zM188 373h1v1h-1zM188 375h1v1h-1zM188 377h1v1h-1zM188 379h1v1h-1zM188 381h1v1h-1zM188 383h1v1h-1zM188 385h1v1h-1zM188 387h1v1h-1zM188 389h1v1h-1zM188 391h1v1h-1zM188 393h1v1h-1zM188 395h1v1h-1zM188 397h1v1h-1zM188 399h1v1h-1zM188 401h1v1h-1zM188 403h1v1h-1zM192 225h1v1h-1zM192 245h1v1h-1zM192 265h1v1h-1zM192 285h1v1h-1zM192 305h1v1h-1zM192 325h1v1h-1zM192 345h1v1h-1zM192 365h1v1h-1zM192 385h1v1h-1zM194 305h1v1h-1zM196 185h1v1h-1zM196 205h1v1h-1zM196 225h1v1h-1zM196 245h1v1h-1zM196 265h1v1h-1zM200 185h1v1h-1zM200 205h1v1h-1zM200 225h1v1h-1zM200 245h1v1h-1zM200 265h1v1h-1zM200 285h1v1h-1zM200 305h1v1h-1zM200 325h1v1h-1zM200 345h1v1h-1zM200 365h1v1h-1zM202 305h1v1h-1zM204 305h1v1h-1zM204 325h1v1h-1zM204 345h1v1h-1zM204 365h1v1h-1zM204 385h1v1h-1zM208 275h1v1h-1zM208 278h1v1h-1zM208 281h1v1h-1zM208 284h1v2h-1zM208 287h1v1h-1zM208 290h1v1h-1zM208 293h1v1h-1zM208 296h1v1h-1zM208 299h1v1h-1zM208 302h1v1h-1zM208 305h1v1h-1zM208 308h1v1h-1zM208 311h1v1h-1zM208 314h1v1h-1zM208 317h1v1h-1zM208 320h1v1h-1zM208 323h1v1h-1zM208 325h1v2h-1zM208 329h1v1h-1zM208 332h1v1h-1zM208 335h1v1h-1zM208 338h1v1h-1zM208 341h1v1h-1zM208 344h1v2h-1zM208 347h1v1h-1zM208 350h1v1h-1zM208 353h1v1h-1zM208 356h1v1h-1zM208 359h1v1h-1zM208 362h1v1h-1zM208 365h1v1h-1zM208 368h1v1h-1zM208 371h1v1h-1zM208 374h1v1h-1zM208 377h1v1h-1zM208 380h1v1h-1zM208 383h1v1h-1zM208 385h1v2h-1zM208 389h1v1h-1zM208 392h1v1h-1zM208 395h1v1h-1zM208 398h1v1h-1zM210 305h1v1h-1zM212 185h1v1h-1zM212 205h1v1h-1zM212 225h1v1h-1zM212 245h1v1h-1zM212 265h1v1h-1zM212 285h1v1h-1zM212 305h1v1h-1zM212 325h1v1h-1zM216 185h1v1h-1zM216 205h1v1h-1zM218 305h1v1h-1zM220 185h1v1h-1zM220 205h1v1h-1zM220 225h1v1h-1zM220 245h1v1h-1zM220 265h1v1h-1zM220 285h1v1h-1zM220 305h1v1h-1zM220 325h1v1h-1zM220 345h1v1h-1zM220 365h1v1h-1zM222 305h1v1h-1zM224 265h1v1h-1zM224 285h1v1h-1zM224 305h1v1h-1zM224 325h1v1h-1zM224 345h1v1h-1zM224 365h1v1h-1zM224 385h1v1h-1zM228 356h1v1h-1zM228 359h1v1h-1zM228 362h1v1h-1zM228 365h1v1h-1zM228 368h1v1h-1zM228 371h1v1h-1zM228 374h1v1h-1zM228 377h1v1h-1zM228 380h1v1h-1zM228 383h1v1h-1zM228 385h1v2h-1zM228 389h1v1h-1zM228 392h1v1h-1zM228 395h1v1h-1zM228 398h1v1h-1zM228 401h1v1h-1zM228 404h1v1h-1zM232 265h1v1h-1zM232 285h1v1h-1zM232 305h1v1h-1zM232 325h1v1h-1zM232 345h1v1h-1zM232 365h1v1h-1zM232 385h1v1h-1zM234 305h1v1h-1zM236 185h1v1h-1zM236 205h1v1h-1zM236 225h1v1h-1zM236 245h1v1h-1zM236 265h1v1h-1zM236 285h1v1h-1zM236 305h1v1h-1zM236 325h1v1h-1zM236 345h1v1h-1zM236 365h1v1h-1zM238 305h1v1h-1zM240 185h1v1h-1zM240 205h1v1h-1zM240 225h1v1h-1zM240 245h1v1h-1zM240 265h1v1h-1zM244 185h1v1h-1zM248 173h1v1h-1zM248 176h1v1h-1zM248 179h1v1h-1zM248 182h1v1h-1zM248 185h1v1h-1zM248 188h1v1h-1zM248 191h1v1h-1zM248 194h1v1h-1zM248 197h1v1h-1zM248 200h1v1h-1zM248 203h1v1h-1zM248 205h1v2h-1zM248 209h1v1h-1zM248 212h1v1h-1zM248 215h1v1h-1zM248 218h1v1h-1zM248 221h1v1h-1zM248 224h1v2h-1zM248 227h1v1h-1zM248 230h1v1h-1zM248 233h1v1h-1zM248 236h1v1h-1zM248 239h1v1h-1zM248 242h1v1h-1zM248 245h1v1h-1zM248 248h1v1h-1zM248 251h1v1h-1zM248 254h1v1h-1zM248 257h1v1h-1zM248 260h1v1h-1zM248 263h1v1h-1zM248 265h1v2h-1zM248 269h1v1h-1zM252 345h1v1h-1zM252 365h1v1h-1zM252 385h1v1h-1zM252 405h1v1h-1zM256 405h1v1h-1zM260 365h1v1h-1zM260 385h1v1h-1zM260 405h1v1h-1zM264 325h1v1h-1zM264 345h1v1h-1zM264 365h1v1h-1zM264 385h1v1h-1zM264 405h1v1h-1zM268 296h1v1h-1zM268 299h1v1h-1zM268 302h1v1h-1zM268 305h1v1h-1zM268 308h1v1h-1zM268 311h1v1h-1zM268 314h1v1h-1zM268 317h1v1h-1zM268 320h1v1h-1zM268 323h1v1h-1zM268 325h1v2h-1zM268 329h1v1h-1zM268 332h1v1h-1zM268 335h1v1h-1zM268 338h1v1h-1zM268 341h1v1h-1zM268 344h1v2h-1zM268 347h1v1h-1zM268 350h1v1h-1zM268 353h1v1h-1zM268 356h1v1h-1zM268 359h1v1h-1zM268 362h1v1h-1zM268 365h1v1h-1zM268 368h1v1h-1zM268 371h1v1h-1zM268 374h1v1h-1zM268 377h1v1h-1zM268 380h1v1h-1zM268 383h1v1h-1zM268 385h1v2h-1zM268 389h1v1h-1zM268 392h1v1h-1zM268 395h1v1h-1zM268 398h1v1h-1zM268 401h1v1h-1zM268 404h1v2h-1zM270 305h1v1h-1zM272 285h1v1h-1zM272 305h1v1h-1zM272 325h1v1h-1zM272 345h1v1h-1zM272 365h1v1h-1zM272 385h1v1h-1zM272 405h1v1h-1zM274 305h1v1h-1zM276 265h1v1h-1zM276 285h1v1h-1zM276 305h1v1h-1zM276 325h1v1h-1zM276 345h1v1h-1zM276 365h1v1h-1zM276 385h1v1h-1zM276 405h1v1h-1zM278 305h1v1h-1zM280 265h1v1h-1zM280 285h1v1h-1zM280 305h1v1h-1zM280 325h1v1h-1zM280 345h1v1h-1zM280 365h1v1h-1zM280 385h1v1h-1zM280 405h1v1h-1zM282 305h1v1h-1zM284 285h1v1h-1zM284 305h1v1h-1zM284 325h1v1h-1zM284 345h1v1h-1zM284 365h1v1h-1zM284 385h1v1h-1zM284 405h1v1h-1zM286 305h1v1h-1zM288 285h1v1h-1zM288 287h1v1h-1zM288 289h1v1h-1zM288 291h1v1h-1zM288 293h1v1h-1zM288 295h1v1h-1zM288 297h1v1h-1zM288 299h1v1h-1zM288 301h1v1h-1zM288 303h1v1h-1zM288 305h1v1h-1zM288 307h1v1h-1zM288 309h1v1h-1zM288 311h1v1h-1zM288 313h1v1h-1zM288 315h1v1h-1zM288 317h1v1h-1zM288 319h1v1h-1zM288 321h1v1h-1zM288 323h1v1h-1zM288 325h1v1h-1zM288 327h1v1h-1zM288 329h1v1h-1zM288 331h1v1h-1zM288 333h1v1h-1zM288 335h1v1h-1zM288 337h1v1h-1zM288 339h1v1h-1zM288 341h1v1h-1zM288 343h1v1h-1zM288 345h1v1h-1zM288 347h1v1h-1zM288 349h1v1h-1zM288 351h1v1h-1zM288 353h1v1h-1zM288 355h1v1h-1zM288 357h1v1h-1zM288 359h1v1h-1zM288 361h1v1h-1zM288 363h1v1h-1zM288 365h1v1h-1zM288 367h1v1h-1zM288 369h1v1h-1zM288 371h1v1h-1zM288 373h1v1h-1zM288 375h1v1h-1zM288 377h1v1h-1zM288 379h1v1h-1zM288 381h1v1h-1zM288 383h1v1h-1zM288 385h1v1h-1zM288 387h1v1h-1zM288 389h1v1h-1zM288 391h1v1h-1zM288 393h1v1h-1zM288 395h1v1h-1zM288 397h1v1h-1zM288 399h1v1h-1zM288 401h1v1h-1zM288 403h1v1h-1zM288 405h1v1h-1zM292 325h1v1h-1zM292 345h1v1h-1zM292 365h1v1h-1zM292 385h1v1h-1zM292 405h1v1h-1zM296 345h1v1h-1zM296 365h1v1h-1zM296 385h1v1h-1zM296 405h1v1h-1zM300 385h1v1h-1zM300 405h1v1h-1zM304 405h1v1h-1zM308 353h1v1h-1zM308 356h1v1h-1zM308 359h1v1h-1zM308 362h1v1h-1zM308 365h1v1h-1zM308 368h1v1h-1zM308 371h1v1h-1zM308 374h1v1h-1zM308 377h1v1h-1zM308 380h1v1h-1zM308 383h1v1h-1zM308 385h1v2h-1zM308 389h1v1h-1zM308 392h1v1h-1zM308 395h1v1h-1zM308 398h1v1h-1zM308 401h1v1h-1zM308 404h1v2h-1zM312 265h1v1h-1zM312 285h1v1h-1zM312 305h1v1h-1zM312 325h1v1h-1zM312 345h1v1h-1zM312 365h1v1h-1zM312 385h1v1h-1zM312 405h1v1h-1zM314 305h1v1h-1zM316 185h1v1h-1zM316 205h1v1h-1zM316 225h1v1h-1zM316 245h1v1h-1zM316 265h1v1h-1zM316 285h1v1h-1zM316 305h1v1h-1zM316 325h1v1h-1zM316 345h1v1h-1zM316 365h1v1h-1zM316 385h1v1h-1zM316 405h1v1h-1zM318 305h1v1h-1zM320 185h1v1h-1zM320 205h1v1h-1zM320 225h1v1h-1zM320 245h1v1h-1zM320 265h1v1h-1zM320 285h1v1h-1zM320 305h1v1h-1zM320 325h1v1h-1zM328 170h1v1h-1zM328 173h1v1h-1zM328 176h1v1h-1zM328 179h1v1h-1zM328 182h1v1h-1zM328 185h1v1h-1zM328 188h1v1h-1zM328 191h1v1h-1zM328 194h1v1h-1zM328 197h1v1h-1zM328 200h1v1h-1zM328 203h1v1h-1zM328 205h1v2h-1zM328 209h1v1h-1zM328 212h1v1h-1zM328 215h1v1h-1zM328 218h1v1h-1zM328 221h1v1h-1zM328 224h1v2h-1zM328 227h1v1h-1zM328 230h1v1h-1zM328 233h1v1h-1zM328 236h1v1h-1zM328 239h1v1h-1zM328 242h1v1h-1zM328 245h1v1h-1zM328 248h1v1h-1zM328 251h1v1h-1zM328 254h1v1h-1zM328 257h1v1h-1zM328 260h1v1h-1zM328 263h1v1h-1zM328 265h1v2h-1zM328 269h1v1h-1zM328 272h1v1h-1zM328 275h1v1h-1zM328 278h1v1h-1zM328 281h1v1h-1zM328 284h1v2h-1zM328 287h1v1h-1zM328 290h1v1h-1zM328 293h1v1h-1zM328 296h1v1h-1zM328 299h1v1h-1zM328 302h1v1h-1zM328 305h1v1h-1zM328 308h1v1h-1zM328 311h1v1h-1zM328 314h1v1h-1zM328 317h1v1h-1zM328 320h1v1h-1zM328 323h1v1h-1zM330 305h1v1h-1zM332 325h1v1h-1zM332 345h1v1h-1zM332 365h1v1h-1zM332 385h1v1h-1zM336 345h1v1h-1zM336 365h1v1h-1zM336 385h1v1h-1zM338 305h1v1h-1zM340 185h1v1h-1zM344 285h1v1h-1zM344 305h1v1h-1zM344 325h1v1h-1zM344 345h1v1h-1zM344 365h1v1h-1zM344 385h1v1h-1zM348 275h1v1h-1zM348 278h1v1h-1zM348 281h1v1h-1zM348 284h1v2h-1zM348 287h1v1h-1zM348 290h1v1h-1zM348 293h1v1h-1zM348 296h1v1h-1zM348 299h1v1h-1zM348 302h1v1h-1zM348 305h1v1h-1zM348 308h1v1h-1zM348 311h1v1h-1zM348 314h1v1h-1zM348 317h1v1h-1zM348 320h1v1h-1zM348 323h1v1h-1zM348 325h1v2h-1zM348 329h1v1h-1zM348 332h1v1h-1zM348 335h1v1h-1zM348 338h1v1h-1zM348 341h1v1h-1zM348 344h1v2h-1zM348 347h1v1h-1zM348 350h1v1h-1zM348 353h1v1h-1zM348 356h1v1h-1zM348 359h1v1h-1zM348 362h1v1h-1zM348 365h1v1h-1zM348 368h1v1h-1zM348 371h1v1h-1zM348 374h1v1h-1zM348 377h1v1h-1zM348 380h1v1h-1zM348 383h1v1h-1zM348 385h1v2h-1zM348 389h1v1h-1zM348 392h1v1h-1zM348 395h1v1h-1zM348 398h1v1h-1zM348 401h1v1h-1zM348 404h1v1h-1zM354 305h1v1h-1zM356 385h1v1h-1zM360 165h1v1h-1zM360 185h1v1h-1zM360 205h1v1h-1zM364 365h1v1h-1zM364 385h1v1h-1zM368 165h1v1h-1zM368 167h1v1h-1zM368 170h1v1h-1zM368 173h1v1h-1zM368 176h1v1h-1zM368 179h1v1h-1zM368 182h1v1h-1zM368 185h1v1h-1zM368 188h1v1h-1zM368 191h1v1h-1zM368 194h1v1h-1zM368 197h1v1h-1zM368 200h1v1h-1zM368 203h1v1h-1zM368 205h1v2h-1zM368 209h1v1h-1zM368 212h1v1h-1zM368 215h1v1h-1zM372 365h1v1h-1zM372 385h1v1h-1zM376 165h1v1h-1zM376 185h1v1h-1zM376 205h1v1h-1zM376 225h1v1h-1zM380 305h1v1h-1zM380 325h1v1h-1zM380 345h1v1h-1zM380 365h1v1h-1zM384 285h1v1h-1zM384 305h1v1h-1zM384 325h1v1h-1zM384 345h1v1h-1zM388 169h1v1h-1zM388 171h1v1h-1zM388 173h1v1h-1zM388 175h1v1h-1zM388 177h1v1h-1zM388 179h1v1h-1zM388 181h1v1h-1zM388 183h1v1h-1zM388 185h1v1h-1zM388 187h1v1h-1zM388 189h1v1h-1zM388 191h1v1h-1zM388 193h1v1h-1zM388 195h1v1h-1zM388 197h1v1h-1zM388 199h1v1h-1zM388 201h1v1h-1zM388 203h1v1h-1zM388 205h1v1h-1zM388 207h1v1h-1zM388 209h1v1h-1zM390 305h1v1h-1zM392 385h1v1h-1zM394 305h1v1h-1zM396 165h1v1h-1zM396 185h1v1h-1zM396 205h1v1h-1zM400 245h1v1h-1zM400 265h1v1h-1zM400 285h1v1h-1zM400 305h1v1h-1zM400 325h1v1h-1zM404 385h1v1h-1zM408 164h1v2h-1zM408 167h1v1h-1zM408 170h1v1h-1zM408 173h1v1h-1zM408 176h1v1h-1zM412 285h1v1h-1zM412 305h1v1h-1zM412 325h1v1h-1zM412 345h1v1h-1zM416 385h1v1h-1zM418 305h1v1h-1zM420 165h1v1h-1zM420 185h1v1h-1zM424 225h1v1h-1zM424 245h1v1h-1zM424 265h1v1h-1zM428 380h1v1h-1zM428 383h1v1h-1zM428 385h1v2h-1zM432 205h1v1h-1zM432 225h1v1h-1zM432 245h1v1h-1zM432 265h1v1h-1zM436 185h1v1h-1zM438 305h1v1h-1zM440 385h1v1h-1zM444 345h1v1h-1zM444 365h1v1h-1zM444 385h1v1h-1zM448 161h1v1h-1zM448 164h1v2h-1zM448 167h1v1h-1zM448 170h1v1h-1zM448 173h1v1h-1zM448 176h1v1h-1zM452 185h1v1h-1zM452 205h1v1h-1zM452 225h1v1h-1zM454 305h1v1h-1zM460 345h1v1h-1zM460 365h1v1h-1zM464 165h1v1h-1zM464 185h1v1h-1zM468 167h1v1h-1zM468 170h1v1h-1zM468 173h1v1h-1zM468 176h1v1h-1zM468 179h1v1h-1zM468 182h1v1h-1zM468 185h1v1h-1zM468 188h1v1h-1zM468 191h1v1h-1zM472 365h1v1h-1zM472 385h1v1h-1zM476 385h1v1h-1zM480 225h1v1h-1zM480 245h1v1h-1zM480 265h1v1h-1zM488 227h1v1h-1zM488 229h1v1h-1zM488 231h1v1h-1zM488 233h1v1h-1zM488 235h1v1h-1zM488 237h1v1h-1zM488 239h1v1h-1zM488 241h1v1h-1zM488 243h1v1h-1zM488 245h1v1h-1zM488 247h1v1h-1zM488 249h1v1h-1zM488 251h1v1h-1zM488 253h1v1h-1zM488 255h1v1h-1zM488 257h1v1h-1zM488 259h1v1h-1zM488 261h1v1h-1zM488 263h1v1h-1zM496 385h1v1h-1zM498 305h1v1h-1zM500 225h1v1h-1zM500 245h1v1h-1zM508 209h1v1h-1zM508 212h1v1h-1zM508 215h1v1h-1zM508 218h1v1h-1zM508 221h1v1h-1zM508 224h1v2h-1zM508 227h1v1h-1zM508 230h1v1h-1zM508 233h1v1h-1zM508 236h1v1h-1zM508 239h1v1h-1zM508 242h1v1h-1zM508 245h1v1h-1zM510 305h1v1h-1zM512 385h1v1h-1zM516 385h1v1h-1zM520 285h1v1h-1zM520 297h1v1h-1zM520 302h1v1h-1zM520 305h1v1h-1zM524 165h1v1h-1zM528 165h1v1h-1zM528 167h1v1h-1zM532 265h1v1h-1zM532 285h1v1h-1zM532 305h1v1h-1zM540 385h1v1h-1zM544 285h1v1h-1zM544 294h1v1h-1zM544 297h1v2h-1zM544 302h1v1h-1zM544 305h1v1h-1zM548 161h1v1h-1zM548 164h1v2h-1zM548 167h1v1h-1zM548 170h1v1h-1zM548 173h1v1h-1zM548 176h1v1h-1zM548 179h1v1h-1zM556 225h1v1h-1zM558 305h1v1h-1zM560 365h1v1h-1zM564 385h1v1h-1zM568 368h1v1h-1zM568 371h1v1h-1zM568 374h1v1h-1zM568 377h1v1h-1zM568 380h1v1h-1zM568 383h1v1h-1zM568 385h1v2h-1zM568 389h1v1h-1zM571 297h1v6h-1zM572 265h1v1h-1zM572 285h1v1h-1zM576 165h1v1h-1zM584 205h1v1h-1zM588 311h1v1h-1zM588 313h1v1h-1zM588 315h1v1h-1zM588 317h1v1h-1zM588 319h1v1h-1zM588 321h1v1h-1zM588 323h1v1h-1zM588 325h1v1h-1zM588 327h1v1h-1zM588 329h1v1h-1zM588 331h1v1h-1zM588 333h1v1h-1zM588 335h1v1h-1zM588 337h1v1h-1zM588 339h1v1h-1zM588 341h1v1h-1zM600 345h1v1h-1zM602 305h1v1h-1zM604 265h1v1h-1zM608 158h1v1h-1zM608 161h1v1h-1zM608 164h1v2h-1zM608 167h1v1h-1zM608 170h1v1h-1zM616 185h1v1h-1zM620 265h1v1h-1zM620 285h1v1h-1zM628 383h1v1h-1zM628 385h1v2h-1zM632 385h1v1h-1zM636 325h1v1h-1zM638 305h1v1h-1zM640 245h1v1h-1zM640 265h1v1h-1zM644 165h1v1h-1zM648 173h1v1h-1zM652 165h1v1h-1zM656 225h1v1h-1zM660 325h1v1h-1zM664 385h1v1h-1zM668 380h1v1h-1zM668 383h1v1h-1zM668 385h1v1h-1zM672 385h1v1h-1zM676 345h1v1h-1zM680 285h1v1h-1zM684 205h1v1h-1zM688 161h1v1h-1zM688 163h1v1h-1zM696 165h1v1h-1zM700 225h1v1h-1zM704 305h1v1h-1zM704 325h1v1h-1zM708 374h1v1h-1zM708 377h1v1h-1zM708 380h1v1h-1zM720 385h1v1h-1zM728 395h1v1h-1zM728 398h1v1h-1zM730 305h1v1h-1zM748 260h1v1h-1zM768 260h1v1h-1zM788 261h1v1h-1z"/>
<rect x="0" y="571" width="792" height="1" fill="#505050"/>
</svg>
<div id="status" class="abs">BASE    685.800 SEC(TBF)  -657.617 SEC(TM)  51.0 %EOF T: 36.000 SEC/DIV</div>
<div class="abs" style="left:120px;top:585px;width:666px;height:13px;background:repeating-conic-gradient(#d4d0c8 0 25%,#fcfcfc 0 50%) 0 0/2px 2px"></div>
<svg class="abs" style="left:0;top:585px" width="800" height="15" shape-rendering="crispEdges">
<rect x="0" y="0" width="88" height="1" fill="#000"/>
<rect x="0" y="4" width="88" height="1" fill="#000"/>
<g transform="translate(89,0)">
<rect x="0" y="0" width="15" height="13" fill="#d4d0c8"/>
<rect x="0" y="1" width="14" height="12" fill="#fff"/>
<rect x="1" y="2" width="13" height="11" fill="#d4d0c8"/>
<rect x="14" y="0" width="1" height="13" fill="#404040"/>
</g><g transform="translate(105,0)">
<rect x="0" y="0" width="15" height="13" fill="#d4d0c8"/>
<rect x="0" y="1" width="14" height="12" fill="#fff"/>
<rect x="1" y="2" width="13" height="11" fill="#d4d0c8"/>
<rect x="14" y="0" width="1" height="13" fill="#404040"/>
</g><g transform="translate(785,0)">
<rect x="0" y="0" width="15" height="13" fill="#d4d0c8"/>
<rect x="0" y="1" width="14" height="12" fill="#fff"/>
<rect x="1" y="2" width="13" height="11" fill="#d4d0c8"/>
<rect x="14" y="0" width="1" height="13" fill="#404040"/>
</g>
<path d="M97 4v8l-4-4z" fill="#000" shape-rendering="auto"/>
<path d="M791 4v8l4-4z" fill="#000" shape-rendering="auto"/>
<rect x="0" y="13" width="800" height="2" fill="#f0f0f0"/>
</svg>
</body></html>
